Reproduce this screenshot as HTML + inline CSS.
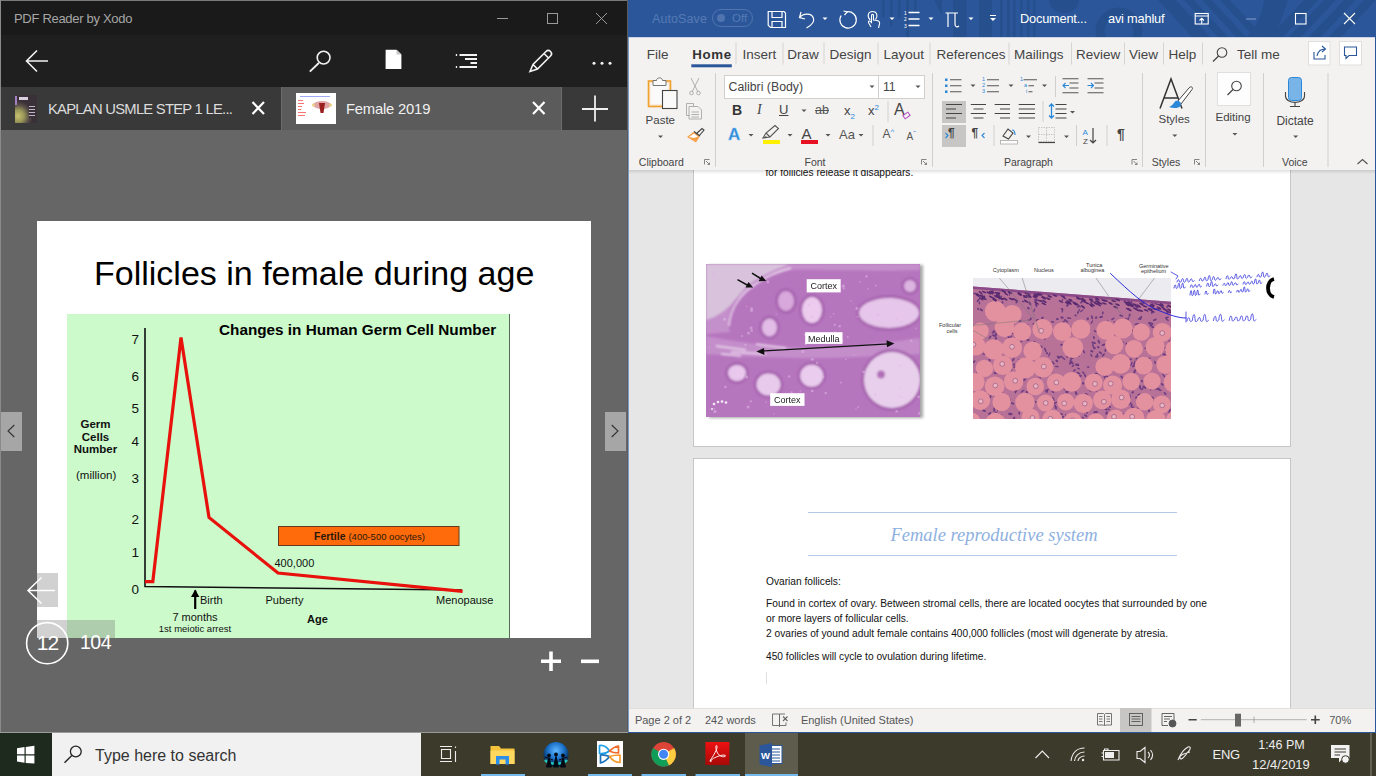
<!DOCTYPE html>
<html><head><meta charset="utf-8">
<style>
*{margin:0;padding:0;box-sizing:border-box}
html,body{width:1376px;height:776px;overflow:hidden;background:#3a3728;font-family:"Liberation Sans",sans-serif}
.a{position:absolute}
#xodo{left:0;top:0;width:628px;height:733px;background:#6b6b6b;overflow:hidden}
#word{left:628px;top:0;width:748px;height:733px;background:#e6e6e6;overflow:hidden}
#tb{left:0;top:733px;width:1376px;height:43px;background:#3b3a2b}
.w{color:#fff}
.t{position:absolute;line-height:1;white-space:nowrap}
</style></head><body>
<!-- XODO -->
<div id="xodo" class="a">
  <div class="a" style="left:0;top:0;width:628px;height:35px;background:#1a1a1a"></div>
  <div class="a" style="left:14px;top:10.5px;font-size:13px;letter-spacing:-0.3px;color:#a6a6a6;white-space:nowrap">PDF Reader by Xodo</div>
  <svg class="a" style="left:480px;top:0" width="148" height="36">
    <g stroke="#9a9a9a" stroke-width="1" fill="none">
      <line x1="17" y1="18.5" x2="28" y2="18.5"/>
      <rect x="67.5" y="13.5" width="10" height="10"/>
      <line x1="116" y1="13" x2="127" y2="24"/><line x1="127" y1="13" x2="116" y2="24"/>
    </g>
  </svg>
  <div class="a" style="left:0;top:35px;width:628px;height:52px;background:#1f1f1f"></div>
  <svg class="a" style="left:0;top:35px" width="628" height="52">
    <g stroke="#f2f2f2" fill="none" stroke-width="1.6">
      <path d="M26.5 26 H48 M37 15.5 L26.5 26 L37 36.5"/>
      <circle cx="323.6" cy="22.6" r="6.4"/>
      <path d="M309.8 36.6 L318.8 28" stroke-width="1.8"/>
      <path d="M530 36.5 L533 29.5 L546 16.5 A2.6 2.6 0 0 1 550.5 21 L537.5 34 Z M533 29.5 L537.5 34 M544 18.5 L548.5 23"/>
    </g>
    <path d="M385.6 14.7 H396.5 L401.4 19.6 V34 H385.6 Z" fill="#fff"/>
    <path d="M396.5 14.7 V19.6 H401.4 Z" fill="#c8c8c8"/>
    <g fill="#f2f2f2">
      <rect x="459.5" y="19" width="17.5" height="2"/><rect x="455.8" y="19" width="1.3" height="2"/>
      <rect x="465" y="23" width="12" height="2"/>
      <rect x="470.5" y="27" width="6.5" height="2"/>
      <rect x="459.5" y="31" width="17.5" height="2"/><rect x="455.8" y="31" width="1.3" height="2"/>
      <circle cx="594" cy="28.3" r="1.5"/><circle cx="602" cy="28.3" r="1.5"/><circle cx="610" cy="28.3" r="1.5"/>
    </g>
  </svg>
  <!-- tabs -->
  <div class="a" style="left:0;top:87px;width:281px;height:43px;background:#393939"></div>
  <div class="a" style="left:282px;top:87px;width:278.5px;height:43px;background:#5b5b5b"></div>
  <div class="a" style="left:562px;top:87px;width:65px;height:43px;background:#393939"></div>
  <div class="a" style="left:15px;top:94.5px;width:22px;height:28px;background:radial-gradient(circle at 3px 21px,#c8c070 0,#9a9858 6px,#5a5048 11px,#3a3038 15px)"></div>
  <div class="a" style="left:15px;top:96px;width:2px;height:9px;background:#a080c0"></div>
  <div class="a" style="left:19px;top:97px;width:9px;height:3px;background:#d8d0e0"></div>
  <div class="a" style="left:29px;top:104px;width:6px;height:14px;background:repeating-linear-gradient(#3a3038 0 2px,#c0b8c8 2px 3px)"></div>
  <div class="a" style="left:48px;top:100.5px;font-size:14.8px;letter-spacing:-0.75px;color:#dcdcdc;white-space:nowrap">KAPLAN USMLE STEP 1 LE...</div>
  <svg class="a" style="left:0;top:87px" width="628" height="43">
    <g stroke="#fff" stroke-width="2.2" fill="none">
      <path d="M252.5 15 L264 27 M264 15 L252.5 27"/>
      <path d="M533 15 L544.5 27 M544.5 15 L533 27"/>
    </g>
    <path d="M582 22 H608 M595 8.5 V34.5" stroke="#eee" stroke-width="1.8"/>
  </svg>
  <div class="a" style="left:296px;top:93px;width:40px;height:31px;background:#fff"></div>
  <div class="a" style="left:300px;top:95.5px;width:30px;height:1px;background:#a0a8f8"></div>
  <svg class="a" style="left:296px;top:93px" width="40" height="31">
    <g fill="#ff5050" opacity="0.8"><rect x="2" y="7" width="5" height="1"/><rect x="2" y="10" width="6" height="1"/><rect x="2" y="13" width="4" height="1"/><rect x="2" y="16" width="3" height="1"/><rect x="2" y="19" width="8" height="1"/><rect x="2" y="22" width="7" height="1"/></g>
    <ellipse cx="26" cy="12" rx="9" ry="4" fill="#d89090" opacity="0.8"/>
    <path d="M23 10 H29 L27.5 20 H24.5 Z" fill="#9a2020"/>
    <circle cx="17.5" cy="12" r="1.5" fill="#e8d080"/><circle cx="34.5" cy="12" r="1.5" fill="#e8d080"/>
  </svg>
  <div class="a" style="left:346px;top:100.5px;font-size:14.8px;letter-spacing:-0.2px;color:#f0f0f0;white-space:nowrap">Female 2019</div>
  <!-- content -->
  <div class="a" style="left:0;top:130px;width:628px;height:603px;background:#666666"></div>
  <div class="a" style="left:37px;top:221px;width:554px;height:416.5px;background:#fff"></div>
  <div class="a" style="left:94px;top:254px;font-size:34px;color:#000;white-space:nowrap">Follicles in female during age</div>
  <div class="a" style="left:67px;top:314px;width:443px;height:323.5px;background:#ccfacb;border-right:1px solid #5a6a5a"></div>
  <svg class="a" style="left:67px;top:314px" width="443" height="324">
    <g stroke="#111" fill="none" stroke-width="1.6">
      <path d="M78 14 V272.5 L395 276"/>
    </g>
    <path d="M78 267.7 L85.8 267.7 L114 23.5 L142 203.5 L211 259 L395.6 277.3" stroke="#e8110c" stroke-width="3.2" fill="none" stroke-linejoin="miter"/>
    <path d="M128.2 295 V276.5" stroke="#000" stroke-width="2.2"/>
    <path d="M124 283 L128.2 275.5 L132.4 283 Z" fill="#000"/>
    <rect x="211.5" y="212.5" width="180.5" height="19" fill="#ff6a0a" stroke="#6a3a20" stroke-width="1"/>
  </svg>
  <div class="a" style="left:219px;top:321px;font-size:15.3px;font-weight:bold;color:#000;white-space:nowrap">Changes in Human Germ Cell Number</div>
  <div class="a" style="left:68px;top:418px;width:55px;font-size:11.5px;line-height:12.7px;font-weight:bold;color:#111;text-align:center">Germ<br>Cells<br>Number</div>
  <div class="a" style="left:76px;top:469px;font-size:11.5px;color:#111;white-space:nowrap">(million)</div>
  <div class="a" style="left:120px;top:0;width:19px;font-size:13.5px;color:#111;text-align:right;line-height:13px">
    <div class="a" style="right:0;top:332.5px">7</div>
    <div class="a" style="right:0;top:369.8px">6</div>
    <div class="a" style="right:0;top:402px">5</div>
    <div class="a" style="right:0;top:435px">4</div>
    <div class="a" style="right:0;top:472px">3</div>
    <div class="a" style="right:0;top:513px">2</div>
    <div class="a" style="right:0;top:546px">1</div>
    <div class="a" style="right:0;top:583px">0</div>
  </div>
  <div class="a" style="left:314px;top:530px;font-size:10.5px;color:#2a1a0a;white-space:nowrap"><b>Fertile</b> <span style="font-size:9.5px">(400-500 oocytes)</span></div>
  <div class="a" style="left:274.5px;top:557px;font-size:11px;color:#111;white-space:nowrap">400,000</div>
  <div class="a" style="left:200px;top:594px;font-size:11px;color:#111;white-space:nowrap">Birth</div>
  <div class="a" style="left:265.5px;top:594px;font-size:11px;color:#111;white-space:nowrap">Puberty</div>
  <div class="a" style="left:436px;top:594px;font-size:11px;color:#111;white-space:nowrap">Menopause</div>
  <div class="a" style="left:307px;top:613px;font-size:11px;font-weight:bold;color:#111;white-space:nowrap">Age</div>
  <div class="a" style="left:160px;top:611px;width:70px;font-size:11px;color:#111;text-align:center;white-space:nowrap">7 months</div>
  <div class="a" style="left:150px;top:623px;width:90px;font-size:9.5px;color:#111;text-align:center;white-space:nowrap">1st meiotic arrest</div>
  <!-- overlays -->
  <div class="a" style="left:1px;top:412px;width:21px;height:38.5px;background:#a6a6a6"></div>
  <div class="a" style="left:605px;top:412px;width:21px;height:38.5px;background:#a6a6a6"></div>
  <svg class="a" style="left:0;top:400px" width="628" height="60">
    <path d="M14.3 25 L8 31 L14.3 37" stroke="#333" stroke-width="1.1" fill="none"/>
    <path d="M611.7 25 L618 31 L611.7 37" stroke="#333" stroke-width="1.1" fill="none"/>
  </svg>
  <div class="a" style="left:0;top:573px;width:58px;height:34px;background:rgba(102,102,102,0.3)"></div>
  <div class="a" style="left:0;top:620px;width:115px;height:17.5px;background:rgba(102,102,102,0.3)"></div>
  <svg class="a" style="left:0;top:560px" width="628" height="120">
    <path d="M28 30.5 H55 M41.5 17.5 L28 30.5 L41.5 43.5" stroke="#fff" stroke-width="1.5" fill="none"/>
    <circle cx="47.2" cy="83.2" r="20.6" stroke="#fff" stroke-width="1.6" fill="none"/>
    <path d="M541 101.3 H561 M551 91.6 V111" stroke="#fff" stroke-width="3.6"/>
    <path d="M581 101.3 H599" stroke="#fff" stroke-width="3.6"/>
  </svg>
  <div class="a" style="left:35px;top:631px;width:25px;font-size:21px;color:#fff;text-align:center;letter-spacing:-1px;white-space:nowrap">12</div>
  <div class="a" style="left:80px;top:631px;font-size:19.5px;color:#fff;white-space:nowrap;letter-spacing:-0.5px">104</div>
  <!-- borders -->
  <div class="a" style="left:0;top:0;width:628px;height:1px;background:#7a7a7a"></div>
  <div class="a" style="left:0;top:0;width:1px;height:733px;background:#8a8a8a"></div>
  <div class="a" style="left:627px;top:0;width:1px;height:733px;background:#5c5c5c"></div>
  <div class="a" style="left:0;top:732px;width:628px;height:1px;background:#9a9a9a"></div>
</div>
<!-- WORD -->
<div id="word" class="a">
  <!-- title bar -->
  <div class="a" style="left:0;top:0;width:748px;height:37px;background:#2b579a;overflow:hidden">
    <svg class="a" style="left:0;top:0" width="748" height="37">
      <g fill="#264f8e">
        <rect x="254" y="0" width="2.5" height="17"/><rect x="262" y="0" width="2.5" height="26"/><rect x="270" y="0" width="2.5" height="18"/>
        <rect x="278" y="0" width="3" height="37"/><rect x="286" y="0" width="2.5" height="15"/>
        <path d="M306 0 H314 V15 Z"/>
        <rect x="325" y="0" width="13.5" height="37"/><rect x="351" y="0" width="13" height="37"/>
        <rect x="372" y="0" width="2.5" height="37"/><rect x="379" y="0" width="2.5" height="37"/><rect x="385" y="0" width="2.5" height="37"/>
        <rect x="392" y="0" width="2.5" height="37"/><rect x="399" y="0" width="2.5" height="37"/><rect x="405" y="0" width="2.5" height="37"/>
        <path d="M421 0 A15 13 0 0 0 451 0 Z"/>
        <circle cx="491" cy="31" r="19" fill="none" stroke="#264f8e" stroke-width="9"/>
        <path d="M530 0 H548 L582 37 H564 Z M556 0 H566 L600 37 H590 Z M574 0 H584 L618 37 H608 Z M592 0 H602 L636 37 H626 Z"/>
        <path d="M636 0 H660 C656 14 650 28 645 37 H618 C628 28 634 14 636 0 Z"/>
        <path d="M676 0 H690 L655 37 H641 Z M696 0 H708 L673 37 H661 Z M716 0 H728 L693 37 H681 Z M736 0 H748 L713 37 H701 Z"/>
      </g>
    </svg>
    <div class="a" style="left:24px;top:12px;font-size:12.5px;color:#557ab5;white-space:nowrap;letter-spacing:0.1px">AutoSave</div>
    <div class="a" style="left:84px;top:9px;width:41px;height:18px;border:1px solid #4f74b0;border-radius:9px"></div>
    <div class="a" style="left:89px;top:14px;width:8px;height:8px;border-radius:50%;background:#4f74b0"></div>
    <div class="a" style="left:104px;top:12px;font-size:11.5px;color:#557ab5;white-space:nowrap">Off</div>
    <svg class="a" style="left:0;top:0" width="748" height="37">
      <g stroke="#fff" fill="none" stroke-width="1.2">
        <path d="M140.2 11.5 H156 L157.5 13 V27.5 H142.5 L140.2 25.2 Z M144 11.5 V17.5 H154 V11.5 M144 27.5 V21.5 H154 V27.5"/>
        <path d="M173 12 L171.5 17.5 L177 19 M171.8 17.3 C175 13 184 12.5 185.5 18.5 C186.5 22 184 25 178.5 28"/>
        <path d="M219 11.8 A8.2 8.2 0 1 1 213.2 15.5"/><path d="M215.5 11 L219.3 11.8 L216.5 15"/>
        <path d="M280.5 12.5 H291.5 M280.5 19 H291.5 M280.5 25.5 H291.5" stroke-width="1.3"/>
        <path d="M317.5 13 H330 M320 13 V27 M327 13 V24 C327 27 329 27.5 331 26"/>
      </g>
      <g fill="#fff" font-size="5" font-family="Liberation Sans">
        <text x="276" y="15">1</text><text x="276" y="21">2</text><text x="276" y="27.5">3</text>
      </g>
      <g stroke="#fff" stroke-width="1.1" fill="none"><path d="M242.2 20 C239 17 239.5 11.5 244.5 11.5 C249.5 11.5 250 17 247.5 19.5"/><path d="M243 27 L240.5 22.5 C240 21 241.5 20.5 242.5 21.5 L243.5 22.5 V15.5 C243.5 14 245.5 14 245.5 15.5 V20 L249 20.5 C251 21 252 22 251.5 24 L250.5 28"/></g>
      <g fill="#fff">
        <path d="M194.5 17.5 h5 l-2.5 2.5z M261.5 17.5 h5 l-2.5 2.5z M300.5 17.5 h5 l-2.5 2.5z M340.5 17.5 h5 l-2.5 2.5z"/>
        <rect x="362" y="15" width="6" height="1"/><path d="M362 18 h6 l-3 3z"/>
      </g>
    </svg>
    <div class="a" style="left:392px;top:10.5px;font-size:12.8px;color:#fff;white-space:nowrap;letter-spacing:-0.2px">Document...</div>
    <div class="a" style="left:480px;top:10.5px;font-size:12.8px;color:#fff;white-space:nowrap;letter-spacing:-0.2px">avi mahluf</div>
    <svg class="a" style="left:0;top:0" width="748" height="37">
      <g stroke="#fff" fill="none" stroke-width="1.1">
        <rect x="567.2" y="13.5" width="13" height="10.5"/><path d="M567 16 H580.5 M573.7 23.8 V18.5 M571.5 20.5 L573.7 18.3 L576 20.5"/>
        <rect x="667.5" y="13.5" width="10.5" height="10.5"/>
        <path d="M716 13 L727 24 M727 13 L716 24"/>
      </g>
      <path d="M618 19 H628" stroke="#7d9ac8" stroke-width="1.1"/>
    </svg>
  </div>
  <div class="a" style="left:0;top:37px;width:1px;height:696px;background:#7f9bc8"></div>
  <!-- ribbon -->
  <div class="a" style="left:1px;top:37px;width:746px;height:133px;background:#f3f2f1"></div>
  <div class="a" style="left:747px;top:37px;width:1px;height:696px;background:#2b579a"></div>
  <div class="a" style="left:1px;top:170px;width:746px;height:538px;background:#e6e6e6"></div>
  <div class="a" style="left:65px;top:170px;width:598px;height:277px;background:#fff;border:1px solid #c6c6c6;border-top:none"></div>
  <div class="a" style="left:65px;top:458px;width:598px;height:300px;background:#fff;border:1px solid #c6c6c6"></div>
<div class="a" style="left:0;top:170px;width:748px;height:20px;overflow:hidden"><div class="t" style="left:137.5px;top:-1.8px;font-size:10.2px;color:#111">for follicles release it disappears.</div></div>
<svg class="a" style="left:77.5px;top:263.8px;filter:drop-shadow(3px 1px 1.5px rgba(0,0,0,0.35))" width="214" height="153"><defs><filter id="bl"><feGaussianBlur stdDeviation="1.3"/></filter><filter id="bl2"><feGaussianBlur stdDeviation="0.5"/></filter></defs><rect width="214" height="153" fill="#b676be"/><g filter="url(#bl)"><path d="M0 0 H214 V6 C160 8 110 5 85 6 C60 12 42 22 30 36 C22 48 20 58 24 68 L0 70 Z" fill="#c490cb"/><path d="M0 0 H84 C62 8 45 16 34 30 C24 42 18 50 0 56 Z" fill="#d8c2dc"/><path d="M23 62 C24 45 34 30 50 20 C60 13 72 7 85 4" stroke="#eedcf0" stroke-width="1.5" fill="none"/><path d="M0 72 C30 78 60 82 100 84 C140 84 170 80 214 74 V90 C170 92 140 94 100 94 C60 94 30 92 0 90 Z" fill="#c48ecb"/><path d="M10 82 L40 86 M25 88 L60 90 M50 80 L80 84 M15 90 L35 92" stroke="#eed8f0" stroke-width="1.6"/><ellipse cx="183" cy="49" rx="33" ry="18" fill="#a866b0"/><ellipse cx="183" cy="49" rx="30" ry="15" fill="#e6c6ea"/><ellipse cx="186" cy="116" rx="31" ry="31" fill="#a866b0"/><ellipse cx="186" cy="116" rx="28" ry="28" fill="#e8d0ec"/><ellipse cx="106" cy="46" rx="13" ry="16" fill="#a866b0"/><ellipse cx="106" cy="46" rx="10" ry="13" fill="#eccbee"/><ellipse cx="80" cy="37" rx="11" ry="13" fill="#a866b0"/><ellipse cx="80" cy="37" rx="8" ry="10" fill="#d8a8dc"/><ellipse cx="63.5" cy="63.5" rx="10.5" ry="12" fill="#a866b0"/><ellipse cx="63.5" cy="63.5" rx="7.5" ry="9" fill="#e2bce6"/><ellipse cx="31" cy="109" rx="12" ry="11" fill="#a866b0"/><ellipse cx="31" cy="109" rx="9" ry="8" fill="#e8c8ec"/><ellipse cx="62.5" cy="120.5" rx="15" ry="14" fill="#a866b0"/><ellipse cx="62.5" cy="120.5" rx="12" ry="11" fill="#e8caec"/><ellipse cx="105.7" cy="111.7" rx="14.5" ry="14" fill="#a866b0"/><ellipse cx="105.7" cy="111.7" rx="11.5" ry="11" fill="#eacdee"/><ellipse cx="204" cy="22" rx="9" ry="9" fill="#a866b0"/><ellipse cx="204" cy="22" rx="6" ry="6" fill="#dcb4e0"/><circle cx="175" cy="110.6" r="4" fill="#b070b8"/></g><g filter="url(#bl2)" fill="#e0b8e6" opacity="0.55"><circle cx="96.8" cy="87.5" r="1.5"/><circle cx="99.6" cy="80.1" r="1.2"/><circle cx="39.5" cy="80.7" r="1.2"/><circle cx="169.7" cy="21.4" r="0.9"/><circle cx="19.4" cy="123.0" r="1.3"/><circle cx="9.0" cy="147.5" r="1.6"/><circle cx="139.9" cy="95.4" r="0.8"/><circle cx="3.2" cy="83.0" r="0.7"/><circle cx="40.7" cy="42.4" r="0.6"/><circle cx="99.3" cy="70.6" r="1.4"/><circle cx="111.1" cy="98.9" r="1.1"/><circle cx="141.8" cy="72.9" r="0.9"/><circle cx="213.5" cy="149.4" r="1.4"/><circle cx="151.5" cy="52.8" r="0.8"/><circle cx="61.9" cy="18.0" r="1.4"/><circle cx="85.7" cy="128.2" r="1.0"/><circle cx="205.0" cy="128.3" r="0.6"/><circle cx="44.9" cy="137.3" r="1.1"/><circle cx="209.8" cy="64.4" r="0.7"/><circle cx="134.7" cy="118.5" r="0.9"/><circle cx="18.6" cy="55.2" r="1.6"/><circle cx="162.2" cy="24.8" r="0.8"/><circle cx="21.6" cy="16.5" r="1.4"/><circle cx="38.0" cy="87.4" r="1.0"/><circle cx="40.8" cy="111.9" r="0.7"/><circle cx="137.8" cy="24.5" r="1.0"/><circle cx="45.6" cy="46.3" r="1.6"/><circle cx="171.9" cy="51.2" r="1.5"/><circle cx="45.1" cy="64.0" r="1.5"/><circle cx="137.4" cy="22.2" r="1.6"/><circle cx="45.6" cy="44.7" r="1.4"/><circle cx="70.4" cy="50.1" r="0.7"/><circle cx="19.3" cy="90.7" r="0.8"/><circle cx="128.7" cy="60.8" r="1.1"/><circle cx="205.3" cy="76.7" r="1.2"/><circle cx="185.4" cy="34.0" r="0.8"/><circle cx="194.4" cy="124.1" r="0.8"/><circle cx="40.6" cy="113.0" r="1.5"/><circle cx="42.1" cy="142.9" r="1.5"/><circle cx="129.2" cy="67.8" r="0.7"/><circle cx="8.3" cy="144.7" r="0.8"/><circle cx="150.8" cy="44.5" r="1.4"/><circle cx="127.6" cy="49.7" r="0.8"/><circle cx="154.2" cy="17.8" r="0.8"/><circle cx="119.7" cy="129.0" r="1.2"/><circle cx="60.0" cy="138.3" r="0.8"/><circle cx="3.5" cy="46.2" r="1.0"/><circle cx="12.9" cy="33.0" r="1.0"/><circle cx="122.4" cy="26.7" r="1.0"/><circle cx="190.7" cy="147.2" r="1.3"/><circle cx="147.9" cy="91.0" r="0.7"/><circle cx="7.5" cy="10.5" r="1.5"/><circle cx="150.0" cy="144.7" r="0.6"/><circle cx="136.1" cy="76.5" r="1.3"/><circle cx="68.2" cy="149.9" r="0.7"/><circle cx="116.9" cy="112.7" r="1.5"/><circle cx="157.7" cy="107.9" r="1.4"/><circle cx="195.8" cy="58.0" r="1.3"/><circle cx="192.8" cy="131.7" r="1.0"/><circle cx="169.2" cy="130.6" r="1.2"/><circle cx="133.7" cy="62.3" r="1.2"/><circle cx="130.3" cy="19.4" r="1.2"/><circle cx="212.6" cy="132.9" r="1.3"/><circle cx="83.1" cy="112.4" r="1.2"/><circle cx="94.3" cy="127.0" r="0.7"/><circle cx="160.5" cy="12.2" r="1.2"/><circle cx="102.9" cy="40.7" r="1.3"/><circle cx="106.4" cy="95.3" r="1.5"/><circle cx="54.7" cy="9.6" r="0.9"/><circle cx="145.1" cy="36.8" r="0.8"/><circle cx="193.8" cy="101.7" r="1.0"/><circle cx="190.8" cy="54.4" r="1.3"/><circle cx="42.5" cy="69.2" r="1.4"/><circle cx="195.6" cy="133.0" r="1.0"/><circle cx="124.8" cy="52.9" r="0.7"/><circle cx="106.2" cy="126.9" r="1.4"/><circle cx="152.2" cy="142.9" r="0.9"/><circle cx="36.2" cy="72.0" r="0.9"/><circle cx="45.8" cy="66.8" r="1.2"/><circle cx="105.7" cy="52.8" r="1.4"/></g><g fill="#fff" opacity="0.85"><circle cx="8" cy="140" r="1.3"/><circle cx="12" cy="138" r="1.3"/><circle cx="16" cy="137.5" r="1.3"/><circle cx="20" cy="138.5" r="1.3"/><circle cx="6" cy="145" r="1"/></g><rect x="100.7" y="15.2" width="34" height="13.2" fill="#fff"/><text x="117.7" y="25.3" font-size="9" font-family="Liberation Sans" text-anchor="middle" fill="#222">Cortex</text><rect x="99.2" y="68.2" width="37.3" height="11.7" fill="#fff"/><text x="117.8" y="77.5" font-size="9" font-family="Liberation Sans" text-anchor="middle" fill="#222">Medulla</text><rect x="64.2" y="129.2" width="34.3" height="12.7" fill="#fff"/><text x="81.3" y="138.8" font-size="9" font-family="Liberation Sans" text-anchor="middle" fill="#222">Cortex</text><path d="M54 87.2 L183 79.8" stroke="#111" stroke-width="1.3"/><path d="M50.4 87.6 L58 84 L58.5 91 Z M188.4 79.5 L180.5 76.2 L181 83.2 Z" fill="#111"/><path d="M31.5 15.7 L43 22 M46 9.2 L57 16" stroke="#111" stroke-width="1.5"/><path d="M47.1 23.6 L39.5 23.5 L42.5 18 Z M60.2 17 L52.6 17.2 L55.7 11.5 Z" fill="#111"/></svg>
<svg class="a" style="left:344.7px;top:278px" width="198" height="141"><defs><filter id="hb"><feGaussianBlur stdDeviation="0.7"/></filter><filter id="hb2"><feGaussianBlur stdDeviation="0.4"/></filter></defs><rect width="198" height="141" fill="#b87298"/><path d="M0 0 H198 V23.7 L0 8.5 Z" fill="#ececf0"/><g filter="url(#hb2)"><ellipse cx="32.7" cy="101.0" rx="1.9" ry="0.8" fill="#6e3e80" transform="rotate(114 32.7 101.0)"/><ellipse cx="156.9" cy="118.1" rx="1.9" ry="0.8" fill="#6e3e80" transform="rotate(92 156.9 118.1)"/><ellipse cx="0.6" cy="58.3" rx="1.3" ry="1.1" fill="#6e3e80" transform="rotate(105 0.6 58.3)"/><ellipse cx="46.0" cy="42.8" rx="2.6" ry="1.1" fill="#6e3e80" transform="rotate(8 46.0 42.8)"/><ellipse cx="173.3" cy="95.6" rx="1.7" ry="0.9" fill="#6e3e80" transform="rotate(6 173.3 95.6)"/><ellipse cx="22.9" cy="134.8" rx="1.4" ry="1.1" fill="#6e3e80" transform="rotate(66 22.9 134.8)"/><ellipse cx="24.7" cy="131.7" rx="2.0" ry="0.9" fill="#6e3e80" transform="rotate(82 24.7 131.7)"/><ellipse cx="96.0" cy="40.1" rx="2.4" ry="0.8" fill="#6e3e80" transform="rotate(7 96.0 40.1)"/><ellipse cx="154.5" cy="46.3" rx="2.5" ry="1.1" fill="#6e3e80" transform="rotate(174 154.5 46.3)"/><ellipse cx="151.0" cy="90.7" rx="1.4" ry="0.9" fill="#6e3e80" transform="rotate(131 151.0 90.7)"/><ellipse cx="163.7" cy="46.0" rx="2.4" ry="0.9" fill="#6e3e80" transform="rotate(166 163.7 46.0)"/><ellipse cx="72.3" cy="71.9" rx="2.6" ry="0.9" fill="#6e3e80" transform="rotate(69 72.3 71.9)"/><ellipse cx="5.3" cy="22.1" rx="2.6" ry="0.9" fill="#6e3e80" transform="rotate(129 5.3 22.1)"/><ellipse cx="97.3" cy="85.3" rx="1.5" ry="1.0" fill="#6e3e80" transform="rotate(135 97.3 85.3)"/><ellipse cx="110.2" cy="94.6" rx="1.4" ry="0.9" fill="#6e3e80" transform="rotate(33 110.2 94.6)"/><ellipse cx="183.6" cy="64.3" rx="1.6" ry="0.8" fill="#6e3e80" transform="rotate(108 183.6 64.3)"/><ellipse cx="13.0" cy="116.7" rx="1.7" ry="1.0" fill="#6e3e80" transform="rotate(140 13.0 116.7)"/><ellipse cx="133.8" cy="128.7" rx="1.8" ry="1.2" fill="#6e3e80" transform="rotate(172 133.8 128.7)"/><ellipse cx="190.4" cy="93.2" rx="1.9" ry="0.9" fill="#6e3e80" transform="rotate(159 190.4 93.2)"/><ellipse cx="48.9" cy="125.2" rx="1.3" ry="1.1" fill="#6e3e80" transform="rotate(29 48.9 125.2)"/><ellipse cx="153.2" cy="79.1" rx="1.3" ry="0.8" fill="#6e3e80" transform="rotate(151 153.2 79.1)"/><ellipse cx="57.4" cy="67.2" rx="1.3" ry="0.9" fill="#6e3e80" transform="rotate(31 57.4 67.2)"/><ellipse cx="178.0" cy="139.1" rx="1.9" ry="0.8" fill="#6e3e80" transform="rotate(134 178.0 139.1)"/><ellipse cx="189.9" cy="85.6" rx="1.2" ry="0.8" fill="#6e3e80" transform="rotate(131 189.9 85.6)"/><ellipse cx="166.0" cy="116.7" rx="2.0" ry="0.9" fill="#6e3e80" transform="rotate(159 166.0 116.7)"/><ellipse cx="115.1" cy="122.5" rx="1.9" ry="0.8" fill="#6e3e80" transform="rotate(55 115.1 122.5)"/><ellipse cx="152.1" cy="22.4" rx="2.5" ry="0.7" fill="#6e3e80" transform="rotate(123 152.1 22.4)"/><ellipse cx="117.5" cy="97.4" rx="2.0" ry="0.8" fill="#6e3e80" transform="rotate(153 117.5 97.4)"/><ellipse cx="80.3" cy="135.8" rx="1.4" ry="0.7" fill="#6e3e80" transform="rotate(163 80.3 135.8)"/><ellipse cx="18.6" cy="14.2" rx="1.4" ry="1.1" fill="#6e3e80" transform="rotate(80 18.6 14.2)"/><ellipse cx="129.8" cy="34.9" rx="1.7" ry="0.9" fill="#6e3e80" transform="rotate(97 129.8 34.9)"/><ellipse cx="43.5" cy="34.1" rx="1.7" ry="1.1" fill="#6e3e80" transform="rotate(33 43.5 34.1)"/><ellipse cx="108.9" cy="23.6" rx="2.4" ry="1.1" fill="#6e3e80" transform="rotate(128 108.9 23.6)"/><ellipse cx="156.6" cy="22.5" rx="1.3" ry="1.1" fill="#6e3e80" transform="rotate(83 156.6 22.5)"/><ellipse cx="34.7" cy="103.8" rx="2.2" ry="0.9" fill="#6e3e80" transform="rotate(46 34.7 103.8)"/><ellipse cx="8.3" cy="61.0" rx="2.5" ry="0.8" fill="#6e3e80" transform="rotate(56 8.3 61.0)"/><ellipse cx="99.6" cy="85.2" rx="1.3" ry="1.0" fill="#6e3e80" transform="rotate(171 99.6 85.2)"/><ellipse cx="100.6" cy="108.2" rx="1.6" ry="1.0" fill="#6e3e80" transform="rotate(174 100.6 108.2)"/><ellipse cx="104.1" cy="86.8" rx="2.3" ry="1.2" fill="#6e3e80" transform="rotate(11 104.1 86.8)"/><ellipse cx="70.3" cy="55.0" rx="1.4" ry="0.7" fill="#6e3e80" transform="rotate(179 70.3 55.0)"/><ellipse cx="14.5" cy="116.8" rx="1.8" ry="1.0" fill="#6e3e80" transform="rotate(137 14.5 116.8)"/><ellipse cx="3.9" cy="94.4" rx="1.9" ry="0.9" fill="#6e3e80" transform="rotate(80 3.9 94.4)"/><ellipse cx="79.5" cy="43.9" rx="1.8" ry="0.8" fill="#6e3e80" transform="rotate(9 79.5 43.9)"/><ellipse cx="139.4" cy="118.9" rx="1.8" ry="0.8" fill="#6e3e80" transform="rotate(130 139.4 118.9)"/><ellipse cx="76.3" cy="76.5" rx="2.5" ry="0.7" fill="#6e3e80" transform="rotate(114 76.3 76.5)"/><ellipse cx="95.0" cy="77.9" rx="2.4" ry="1.1" fill="#6e3e80" transform="rotate(129 95.0 77.9)"/><ellipse cx="124.1" cy="111.6" rx="2.4" ry="1.0" fill="#6e3e80" transform="rotate(120 124.1 111.6)"/><ellipse cx="135.2" cy="49.6" rx="1.7" ry="1.0" fill="#6e3e80" transform="rotate(165 135.2 49.6)"/><ellipse cx="163.3" cy="136.7" rx="1.2" ry="0.9" fill="#6e3e80" transform="rotate(178 163.3 136.7)"/><ellipse cx="61.7" cy="63.8" rx="2.0" ry="0.7" fill="#6e3e80" transform="rotate(26 61.7 63.8)"/><ellipse cx="59.9" cy="133.8" rx="1.8" ry="0.8" fill="#6e3e80" transform="rotate(134 59.9 133.8)"/><ellipse cx="189.3" cy="106.4" rx="1.7" ry="1.0" fill="#6e3e80" transform="rotate(37 189.3 106.4)"/><ellipse cx="135.0" cy="51.5" rx="1.7" ry="0.8" fill="#6e3e80" transform="rotate(171 135.0 51.5)"/><ellipse cx="167.4" cy="40.6" rx="1.5" ry="1.0" fill="#6e3e80" transform="rotate(123 167.4 40.6)"/><ellipse cx="54.9" cy="62.0" rx="1.9" ry="0.9" fill="#6e3e80" transform="rotate(169 54.9 62.0)"/><ellipse cx="122.2" cy="53.2" rx="1.7" ry="0.8" fill="#6e3e80" transform="rotate(31 122.2 53.2)"/><ellipse cx="37.3" cy="136.0" rx="2.3" ry="1.2" fill="#6e3e80" transform="rotate(6 37.3 136.0)"/><ellipse cx="139.5" cy="22.5" rx="1.3" ry="1.0" fill="#6e3e80" transform="rotate(90 139.5 22.5)"/><ellipse cx="138.7" cy="49.2" rx="2.0" ry="0.7" fill="#6e3e80" transform="rotate(1 138.7 49.2)"/><ellipse cx="61.2" cy="71.8" rx="1.7" ry="0.8" fill="#6e3e80" transform="rotate(161 61.2 71.8)"/><ellipse cx="156.8" cy="119.8" rx="1.3" ry="0.8" fill="#6e3e80" transform="rotate(95 156.8 119.8)"/><ellipse cx="79.8" cy="84.8" rx="2.3" ry="1.1" fill="#6e3e80" transform="rotate(41 79.8 84.8)"/><ellipse cx="183.2" cy="127.3" rx="2.0" ry="0.7" fill="#6e3e80" transform="rotate(3 183.2 127.3)"/><ellipse cx="178.1" cy="111.2" rx="1.5" ry="0.7" fill="#6e3e80" transform="rotate(137 178.1 111.2)"/><ellipse cx="161.4" cy="94.1" rx="1.9" ry="1.1" fill="#6e3e80" transform="rotate(112 161.4 94.1)"/><ellipse cx="66.9" cy="48.7" rx="1.6" ry="1.0" fill="#6e3e80" transform="rotate(64 66.9 48.7)"/><ellipse cx="176.2" cy="31.4" rx="1.9" ry="1.0" fill="#6e3e80" transform="rotate(12 176.2 31.4)"/><ellipse cx="37.6" cy="47.1" rx="1.3" ry="0.9" fill="#6e3e80" transform="rotate(11 37.6 47.1)"/><ellipse cx="134.8" cy="99.0" rx="1.3" ry="1.2" fill="#6e3e80" transform="rotate(28 134.8 99.0)"/><ellipse cx="106.6" cy="68.1" rx="2.2" ry="1.0" fill="#6e3e80" transform="rotate(124 106.6 68.1)"/><ellipse cx="15.5" cy="118.5" rx="1.3" ry="0.9" fill="#6e3e80" transform="rotate(38 15.5 118.5)"/><ellipse cx="105.4" cy="95.1" rx="2.2" ry="0.9" fill="#6e3e80" transform="rotate(31 105.4 95.1)"/><ellipse cx="32.1" cy="121.8" rx="2.5" ry="1.0" fill="#6e3e80" transform="rotate(145 32.1 121.8)"/><ellipse cx="43.0" cy="112.5" rx="1.9" ry="1.2" fill="#6e3e80" transform="rotate(162 43.0 112.5)"/><ellipse cx="192.1" cy="69.8" rx="2.5" ry="1.1" fill="#6e3e80" transform="rotate(170 192.1 69.8)"/><ellipse cx="2.2" cy="55.9" rx="2.1" ry="1.1" fill="#6e3e80" transform="rotate(110 2.2 55.9)"/><ellipse cx="128.1" cy="39.0" rx="2.0" ry="1.1" fill="#6e3e80" transform="rotate(168 128.1 39.0)"/><ellipse cx="41.0" cy="140.8" rx="2.3" ry="1.1" fill="#6e3e80" transform="rotate(100 41.0 140.8)"/><ellipse cx="174.8" cy="65.7" rx="1.8" ry="0.8" fill="#6e3e80" transform="rotate(15 174.8 65.7)"/><ellipse cx="106.9" cy="118.2" rx="1.4" ry="0.7" fill="#6e3e80" transform="rotate(65 106.9 118.2)"/><ellipse cx="83.7" cy="88.5" rx="2.1" ry="0.8" fill="#6e3e80" transform="rotate(5 83.7 88.5)"/><ellipse cx="21.2" cy="131.6" rx="2.5" ry="1.0" fill="#6e3e80" transform="rotate(94 21.2 131.6)"/><ellipse cx="24.3" cy="42.5" rx="2.1" ry="1.1" fill="#6e3e80" transform="rotate(76 24.3 42.5)"/><ellipse cx="148.8" cy="99.1" rx="1.8" ry="0.9" fill="#6e3e80" transform="rotate(46 148.8 99.1)"/><ellipse cx="96.9" cy="49.9" rx="1.8" ry="0.7" fill="#6e3e80" transform="rotate(97 96.9 49.9)"/><ellipse cx="162.9" cy="91.8" rx="2.2" ry="1.1" fill="#6e3e80" transform="rotate(144 162.9 91.8)"/><ellipse cx="196.7" cy="68.5" rx="1.2" ry="1.0" fill="#6e3e80" transform="rotate(71 196.7 68.5)"/><ellipse cx="115.1" cy="89.1" rx="1.5" ry="0.8" fill="#6e3e80" transform="rotate(180 115.1 89.1)"/><ellipse cx="145.4" cy="118.4" rx="1.3" ry="0.9" fill="#6e3e80" transform="rotate(87 145.4 118.4)"/><ellipse cx="163.6" cy="81.5" rx="1.7" ry="1.0" fill="#6e3e80" transform="rotate(83 163.6 81.5)"/><ellipse cx="118.5" cy="103.4" rx="2.3" ry="0.9" fill="#6e3e80" transform="rotate(156 118.5 103.4)"/><ellipse cx="49.6" cy="113.2" rx="2.5" ry="0.8" fill="#6e3e80" transform="rotate(143 49.6 113.2)"/><ellipse cx="167.8" cy="128.0" rx="1.6" ry="1.0" fill="#6e3e80" transform="rotate(14 167.8 128.0)"/><ellipse cx="28.9" cy="119.2" rx="2.2" ry="0.8" fill="#6e3e80" transform="rotate(48 28.9 119.2)"/><ellipse cx="43.2" cy="39.4" rx="2.2" ry="0.8" fill="#6e3e80" transform="rotate(90 43.2 39.4)"/><ellipse cx="135.9" cy="60.5" rx="1.7" ry="0.8" fill="#6e3e80" transform="rotate(117 135.9 60.5)"/><ellipse cx="27.9" cy="19.1" rx="1.8" ry="0.8" fill="#6e3e80" transform="rotate(125 27.9 19.1)"/><ellipse cx="174.4" cy="100.2" rx="2.2" ry="1.0" fill="#6e3e80" transform="rotate(4 174.4 100.2)"/><ellipse cx="87.9" cy="78.7" rx="1.7" ry="1.0" fill="#6e3e80" transform="rotate(173 87.9 78.7)"/><ellipse cx="125.9" cy="63.7" rx="2.3" ry="1.0" fill="#6e3e80" transform="rotate(62 125.9 63.7)"/><ellipse cx="90.5" cy="80.4" rx="2.3" ry="0.7" fill="#6e3e80" transform="rotate(40 90.5 80.4)"/><ellipse cx="127.4" cy="74.7" rx="2.0" ry="1.0" fill="#6e3e80" transform="rotate(40 127.4 74.7)"/><ellipse cx="17.2" cy="74.6" rx="2.3" ry="0.9" fill="#6e3e80" transform="rotate(30 17.2 74.6)"/><ellipse cx="65.0" cy="41.8" rx="1.5" ry="0.8" fill="#6e3e80" transform="rotate(9 65.0 41.8)"/><ellipse cx="123.6" cy="122.4" rx="1.4" ry="1.0" fill="#6e3e80" transform="rotate(40 123.6 122.4)"/><ellipse cx="22.9" cy="63.8" rx="1.5" ry="1.0" fill="#6e3e80" transform="rotate(137 22.9 63.8)"/><ellipse cx="106.7" cy="28.2" rx="2.0" ry="0.7" fill="#6e3e80" transform="rotate(44 106.7 28.2)"/><ellipse cx="40.3" cy="86.7" rx="1.9" ry="1.0" fill="#6e3e80" transform="rotate(147 40.3 86.7)"/><ellipse cx="1.8" cy="49.4" rx="2.5" ry="0.9" fill="#6e3e80" transform="rotate(57 1.8 49.4)"/><ellipse cx="155.4" cy="25.6" rx="2.4" ry="1.1" fill="#6e3e80" transform="rotate(90 155.4 25.6)"/><ellipse cx="114.8" cy="40.7" rx="1.3" ry="1.2" fill="#6e3e80" transform="rotate(167 114.8 40.7)"/><ellipse cx="153.7" cy="107.5" rx="1.4" ry="0.9" fill="#6e3e80" transform="rotate(96 153.7 107.5)"/><ellipse cx="131.5" cy="99.2" rx="2.3" ry="0.7" fill="#6e3e80" transform="rotate(70 131.5 99.2)"/><ellipse cx="56.9" cy="25.4" rx="2.3" ry="1.1" fill="#6e3e80" transform="rotate(58 56.9 25.4)"/><ellipse cx="29.6" cy="51.6" rx="2.1" ry="0.9" fill="#6e3e80" transform="rotate(20 29.6 51.6)"/><ellipse cx="45.9" cy="60.9" rx="1.8" ry="1.0" fill="#6e3e80" transform="rotate(156 45.9 60.9)"/><ellipse cx="124.3" cy="76.8" rx="1.7" ry="0.8" fill="#6e3e80" transform="rotate(100 124.3 76.8)"/><ellipse cx="97.9" cy="54.8" rx="1.5" ry="1.2" fill="#6e3e80" transform="rotate(59 97.9 54.8)"/><ellipse cx="84.3" cy="41.0" rx="1.5" ry="1.1" fill="#6e3e80" transform="rotate(6 84.3 41.0)"/><ellipse cx="66.7" cy="98.9" rx="2.1" ry="0.9" fill="#6e3e80" transform="rotate(41 66.7 98.9)"/><ellipse cx="145.8" cy="84.3" rx="1.6" ry="1.0" fill="#6e3e80" transform="rotate(68 145.8 84.3)"/><ellipse cx="164.7" cy="104.4" rx="1.7" ry="1.1" fill="#6e3e80" transform="rotate(86 164.7 104.4)"/><ellipse cx="167.6" cy="39.7" rx="2.3" ry="1.0" fill="#6e3e80" transform="rotate(122 167.6 39.7)"/><ellipse cx="190.9" cy="126.9" rx="2.6" ry="0.9" fill="#6e3e80" transform="rotate(44 190.9 126.9)"/><ellipse cx="75.2" cy="138.0" rx="1.8" ry="1.0" fill="#6e3e80" transform="rotate(30 75.2 138.0)"/><ellipse cx="54.0" cy="47.7" rx="2.1" ry="1.1" fill="#6e3e80" transform="rotate(143 54.0 47.7)"/><ellipse cx="156.4" cy="125.7" rx="2.4" ry="1.2" fill="#6e3e80" transform="rotate(161 156.4 125.7)"/><ellipse cx="98.9" cy="104.0" rx="2.6" ry="1.0" fill="#6e3e80" transform="rotate(92 98.9 104.0)"/><ellipse cx="85.3" cy="99.0" rx="1.4" ry="0.9" fill="#6e3e80" transform="rotate(53 85.3 99.0)"/><ellipse cx="27.1" cy="12.1" rx="1.8" ry="1.1" fill="#6e3e80" transform="rotate(17 27.1 12.1)"/><ellipse cx="9.6" cy="93.5" rx="1.9" ry="0.8" fill="#6e3e80" transform="rotate(20 9.6 93.5)"/><ellipse cx="88.3" cy="105.1" rx="1.7" ry="1.1" fill="#6e3e80" transform="rotate(74 88.3 105.1)"/><ellipse cx="22.9" cy="56.5" rx="2.4" ry="1.2" fill="#6e3e80" transform="rotate(126 22.9 56.5)"/><ellipse cx="50.9" cy="93.2" rx="2.2" ry="1.1" fill="#6e3e80" transform="rotate(56 50.9 93.2)"/><ellipse cx="26.7" cy="56.2" rx="1.7" ry="1.0" fill="#6e3e80" transform="rotate(169 26.7 56.2)"/><ellipse cx="162.1" cy="55.1" rx="1.2" ry="0.9" fill="#6e3e80" transform="rotate(141 162.1 55.1)"/><ellipse cx="33.0" cy="56.6" rx="1.2" ry="1.1" fill="#6e3e80" transform="rotate(38 33.0 56.6)"/><ellipse cx="34.4" cy="86.0" rx="2.4" ry="1.1" fill="#6e3e80" transform="rotate(100 34.4 86.0)"/><ellipse cx="123.1" cy="39.6" rx="1.3" ry="1.2" fill="#6e3e80" transform="rotate(137 123.1 39.6)"/><ellipse cx="61.1" cy="46.3" rx="1.8" ry="1.1" fill="#6e3e80" transform="rotate(39 61.1 46.3)"/><ellipse cx="169.3" cy="110.9" rx="1.5" ry="0.9" fill="#6e3e80" transform="rotate(131 169.3 110.9)"/><ellipse cx="60.2" cy="69.1" rx="2.6" ry="0.7" fill="#6e3e80" transform="rotate(157 60.2 69.1)"/><ellipse cx="191.0" cy="131.5" rx="2.2" ry="1.1" fill="#6e3e80" transform="rotate(83 191.0 131.5)"/><ellipse cx="37.0" cy="91.6" rx="2.4" ry="1.2" fill="#6e3e80" transform="rotate(177 37.0 91.6)"/><ellipse cx="16.8" cy="103.8" rx="2.5" ry="0.8" fill="#6e3e80" transform="rotate(88 16.8 103.8)"/><ellipse cx="108.7" cy="32.7" rx="2.2" ry="0.7" fill="#6e3e80" transform="rotate(145 108.7 32.7)"/><ellipse cx="61.3" cy="32.2" rx="2.1" ry="0.7" fill="#6e3e80" transform="rotate(114 61.3 32.2)"/><ellipse cx="188.3" cy="136.9" rx="2.0" ry="0.9" fill="#6e3e80" transform="rotate(79 188.3 136.9)"/><ellipse cx="120.0" cy="67.5" rx="2.2" ry="0.8" fill="#6e3e80" transform="rotate(79 120.0 67.5)"/><ellipse cx="59.1" cy="111.0" rx="1.3" ry="1.2" fill="#6e3e80" transform="rotate(40 59.1 111.0)"/><ellipse cx="31.6" cy="65.0" rx="1.6" ry="0.9" fill="#6e3e80" transform="rotate(56 31.6 65.0)"/><ellipse cx="106.4" cy="32.0" rx="1.3" ry="0.7" fill="#6e3e80" transform="rotate(96 106.4 32.0)"/><ellipse cx="40.0" cy="43.4" rx="1.6" ry="1.1" fill="#6e3e80" transform="rotate(61 40.0 43.4)"/><ellipse cx="130.3" cy="77.0" rx="2.2" ry="0.9" fill="#6e3e80" transform="rotate(139 130.3 77.0)"/><ellipse cx="121.9" cy="109.9" rx="2.3" ry="1.0" fill="#6e3e80" transform="rotate(96 121.9 109.9)"/><ellipse cx="183.7" cy="54.6" rx="2.6" ry="1.0" fill="#6e3e80" transform="rotate(121 183.7 54.6)"/><ellipse cx="179.2" cy="34.4" rx="1.6" ry="1.1" fill="#6e3e80" transform="rotate(130 179.2 34.4)"/><ellipse cx="83.8" cy="82.9" rx="1.6" ry="1.1" fill="#6e3e80" transform="rotate(45 83.8 82.9)"/><ellipse cx="127.4" cy="95.8" rx="1.6" ry="1.2" fill="#6e3e80" transform="rotate(21 127.4 95.8)"/><ellipse cx="40.2" cy="81.7" rx="1.9" ry="1.0" fill="#6e3e80" transform="rotate(125 40.2 81.7)"/><ellipse cx="192.1" cy="115.5" rx="1.8" ry="0.9" fill="#6e3e80" transform="rotate(43 192.1 115.5)"/><ellipse cx="135.4" cy="101.6" rx="2.2" ry="0.9" fill="#6e3e80" transform="rotate(47 135.4 101.6)"/><ellipse cx="3.0" cy="48.0" rx="1.5" ry="1.0" fill="#6e3e80" transform="rotate(68 3.0 48.0)"/><ellipse cx="196.5" cy="133.0" rx="2.4" ry="0.9" fill="#6e3e80" transform="rotate(113 196.5 133.0)"/><ellipse cx="116.1" cy="128.0" rx="1.7" ry="0.9" fill="#6e3e80" transform="rotate(11 116.1 128.0)"/><ellipse cx="67.5" cy="68.7" rx="2.2" ry="1.2" fill="#6e3e80" transform="rotate(10 67.5 68.7)"/><ellipse cx="46.4" cy="36.8" rx="2.3" ry="0.8" fill="#6e3e80" transform="rotate(60 46.4 36.8)"/><ellipse cx="152.6" cy="41.9" rx="2.2" ry="1.0" fill="#6e3e80" transform="rotate(107 152.6 41.9)"/><ellipse cx="16.7" cy="135.4" rx="1.9" ry="1.1" fill="#6e3e80" transform="rotate(153 16.7 135.4)"/><ellipse cx="119.0" cy="39.3" rx="2.3" ry="0.9" fill="#6e3e80" transform="rotate(71 119.0 39.3)"/><ellipse cx="8.3" cy="31.8" rx="2.0" ry="1.0" fill="#6e3e80" transform="rotate(34 8.3 31.8)"/><ellipse cx="88.7" cy="66.7" rx="1.7" ry="1.0" fill="#6e3e80" transform="rotate(173 88.7 66.7)"/><ellipse cx="40.5" cy="78.6" rx="1.4" ry="0.9" fill="#6e3e80" transform="rotate(32 40.5 78.6)"/><ellipse cx="22.8" cy="60.7" rx="2.0" ry="1.1" fill="#6e3e80" transform="rotate(118 22.8 60.7)"/><ellipse cx="94.5" cy="27.2" rx="1.8" ry="1.1" fill="#6e3e80" transform="rotate(131 94.5 27.2)"/><ellipse cx="193.1" cy="85.5" rx="1.7" ry="0.9" fill="#6e3e80" transform="rotate(45 193.1 85.5)"/><ellipse cx="63.2" cy="27.2" rx="2.1" ry="1.1" fill="#6e3e80" transform="rotate(72 63.2 27.2)"/><ellipse cx="150.8" cy="127.1" rx="1.8" ry="1.0" fill="#6e3e80" transform="rotate(144 150.8 127.1)"/><ellipse cx="10.7" cy="114.1" rx="1.6" ry="0.9" fill="#6e3e80" transform="rotate(127 10.7 114.1)"/><ellipse cx="53.8" cy="114.9" rx="2.3" ry="1.2" fill="#6e3e80" transform="rotate(77 53.8 114.9)"/><ellipse cx="154.0" cy="66.8" rx="2.5" ry="1.2" fill="#6e3e80" transform="rotate(62 154.0 66.8)"/><ellipse cx="37.6" cy="59.0" rx="2.3" ry="0.8" fill="#6e3e80" transform="rotate(142 37.6 59.0)"/><ellipse cx="88.4" cy="136.2" rx="1.6" ry="1.0" fill="#6e3e80" transform="rotate(16 88.4 136.2)"/><ellipse cx="179.7" cy="134.7" rx="2.3" ry="1.2" fill="#6e3e80" transform="rotate(84 179.7 134.7)"/><ellipse cx="65.2" cy="43.3" rx="2.3" ry="0.8" fill="#6e3e80" transform="rotate(47 65.2 43.3)"/><ellipse cx="108.2" cy="132.4" rx="2.1" ry="1.0" fill="#6e3e80" transform="rotate(36 108.2 132.4)"/><ellipse cx="191.3" cy="84.2" rx="2.5" ry="1.1" fill="#6e3e80" transform="rotate(88 191.3 84.2)"/><ellipse cx="28.7" cy="115.6" rx="2.6" ry="1.2" fill="#6e3e80" transform="rotate(72 28.7 115.6)"/><ellipse cx="97.7" cy="68.6" rx="1.6" ry="0.8" fill="#6e3e80" transform="rotate(41 97.7 68.6)"/><ellipse cx="33.3" cy="106.2" rx="2.0" ry="1.0" fill="#6e3e80" transform="rotate(9 33.3 106.2)"/><ellipse cx="145.6" cy="89.0" rx="1.6" ry="0.7" fill="#6e3e80" transform="rotate(167 145.6 89.0)"/><ellipse cx="115.3" cy="51.4" rx="2.5" ry="1.0" fill="#6e3e80" transform="rotate(178 115.3 51.4)"/><ellipse cx="165.1" cy="51.2" rx="1.7" ry="0.9" fill="#6e3e80" transform="rotate(87 165.1 51.2)"/><ellipse cx="74.0" cy="75.3" rx="1.2" ry="1.0" fill="#6e3e80" transform="rotate(118 74.0 75.3)"/><ellipse cx="25.3" cy="136.9" rx="2.0" ry="0.9" fill="#6e3e80" transform="rotate(99 25.3 136.9)"/><ellipse cx="139.7" cy="106.0" rx="2.0" ry="0.8" fill="#6e3e80" transform="rotate(164 139.7 106.0)"/><ellipse cx="124.5" cy="25.2" rx="1.6" ry="1.1" fill="#6e3e80" transform="rotate(134 124.5 25.2)"/><ellipse cx="26.1" cy="88.9" rx="1.3" ry="0.8" fill="#6e3e80" transform="rotate(30 26.1 88.9)"/><ellipse cx="168.0" cy="68.5" rx="2.3" ry="1.2" fill="#6e3e80" transform="rotate(94 168.0 68.5)"/><ellipse cx="51.3" cy="102.0" rx="2.3" ry="0.9" fill="#6e3e80" transform="rotate(141 51.3 102.0)"/><ellipse cx="93.9" cy="114.1" rx="1.9" ry="1.0" fill="#6e3e80" transform="rotate(45 93.9 114.1)"/><ellipse cx="168.5" cy="51.4" rx="1.5" ry="0.8" fill="#6e3e80" transform="rotate(120 168.5 51.4)"/><ellipse cx="94.5" cy="97.2" rx="2.5" ry="0.8" fill="#6e3e80" transform="rotate(115 94.5 97.2)"/><ellipse cx="105.0" cy="76.8" rx="2.5" ry="0.8" fill="#6e3e80" transform="rotate(47 105.0 76.8)"/><ellipse cx="51.6" cy="18.6" rx="2.1" ry="0.8" fill="#6e3e80" transform="rotate(116 51.6 18.6)"/><ellipse cx="182.5" cy="98.1" rx="2.5" ry="1.1" fill="#6e3e80" transform="rotate(36 182.5 98.1)"/><ellipse cx="62.1" cy="123.9" rx="1.7" ry="0.9" fill="#6e3e80" transform="rotate(23 62.1 123.9)"/><ellipse cx="189.1" cy="59.0" rx="1.5" ry="1.1" fill="#6e3e80" transform="rotate(69 189.1 59.0)"/><ellipse cx="36.3" cy="121.4" rx="2.0" ry="1.1" fill="#6e3e80" transform="rotate(61 36.3 121.4)"/><ellipse cx="52.8" cy="80.9" rx="2.0" ry="0.9" fill="#6e3e80" transform="rotate(114 52.8 80.9)"/><ellipse cx="127.9" cy="57.6" rx="1.2" ry="1.0" fill="#6e3e80" transform="rotate(28 127.9 57.6)"/><ellipse cx="113.7" cy="116.4" rx="2.1" ry="0.9" fill="#6e3e80" transform="rotate(28 113.7 116.4)"/><ellipse cx="104.0" cy="120.2" rx="1.8" ry="1.0" fill="#6e3e80" transform="rotate(93 104.0 120.2)"/><ellipse cx="29.3" cy="124.6" rx="1.3" ry="0.9" fill="#6e3e80" transform="rotate(93 29.3 124.6)"/><ellipse cx="187.2" cy="138.5" rx="1.6" ry="1.2" fill="#6e3e80" transform="rotate(77 187.2 138.5)"/><ellipse cx="56.3" cy="16.1" rx="1.9" ry="1.0" fill="#6e3e80" transform="rotate(44 56.3 16.1)"/><ellipse cx="13.2" cy="54.1" rx="1.7" ry="0.8" fill="#6e3e80" transform="rotate(131 13.2 54.1)"/><ellipse cx="140.8" cy="73.0" rx="1.9" ry="1.1" fill="#6e3e80" transform="rotate(125 140.8 73.0)"/><ellipse cx="101.4" cy="137.9" rx="2.2" ry="0.9" fill="#6e3e80" transform="rotate(146 101.4 137.9)"/><ellipse cx="120.7" cy="64.8" rx="2.4" ry="1.1" fill="#6e3e80" transform="rotate(14 120.7 64.8)"/><ellipse cx="151.9" cy="124.1" rx="2.6" ry="0.9" fill="#6e3e80" transform="rotate(99 151.9 124.1)"/><ellipse cx="194.2" cy="33.9" rx="2.0" ry="1.1" fill="#6e3e80" transform="rotate(68 194.2 33.9)"/><ellipse cx="103.1" cy="115.1" rx="2.1" ry="1.1" fill="#6e3e80" transform="rotate(67 103.1 115.1)"/><ellipse cx="118.8" cy="21.2" rx="1.2" ry="0.9" fill="#6e3e80" transform="rotate(118 118.8 21.2)"/><ellipse cx="22.7" cy="110.3" rx="2.2" ry="0.7" fill="#6e3e80" transform="rotate(30 22.7 110.3)"/><ellipse cx="41.0" cy="101.9" rx="1.3" ry="1.0" fill="#6e3e80" transform="rotate(166 41.0 101.9)"/><ellipse cx="78.7" cy="93.6" rx="1.2" ry="0.7" fill="#6e3e80" transform="rotate(14 78.7 93.6)"/><ellipse cx="176.4" cy="80.9" rx="1.4" ry="1.0" fill="#6e3e80" transform="rotate(110 176.4 80.9)"/><ellipse cx="178.4" cy="46.5" rx="2.4" ry="1.2" fill="#6e3e80" transform="rotate(141 178.4 46.5)"/><ellipse cx="112.0" cy="97.4" rx="2.3" ry="0.9" fill="#6e3e80" transform="rotate(62 112.0 97.4)"/><ellipse cx="123.5" cy="95.5" rx="2.3" ry="0.7" fill="#6e3e80" transform="rotate(178 123.5 95.5)"/><ellipse cx="35.1" cy="58.2" rx="2.2" ry="0.8" fill="#6e3e80" transform="rotate(71 35.1 58.2)"/><ellipse cx="110.7" cy="73.6" rx="2.1" ry="0.9" fill="#6e3e80" transform="rotate(55 110.7 73.6)"/><ellipse cx="194.0" cy="39.5" rx="2.1" ry="0.9" fill="#6e3e80" transform="rotate(162 194.0 39.5)"/><ellipse cx="15.4" cy="95.0" rx="1.7" ry="1.1" fill="#6e3e80" transform="rotate(145 15.4 95.0)"/><ellipse cx="105.3" cy="28.7" rx="1.6" ry="0.9" fill="#6e3e80" transform="rotate(155 105.3 28.7)"/><ellipse cx="150.8" cy="126.1" rx="1.7" ry="1.1" fill="#6e3e80" transform="rotate(154 150.8 126.1)"/><ellipse cx="30.3" cy="83.1" rx="2.4" ry="1.1" fill="#6e3e80" transform="rotate(78 30.3 83.1)"/><ellipse cx="130.5" cy="118.0" rx="1.8" ry="0.8" fill="#6e3e80" transform="rotate(63 130.5 118.0)"/><ellipse cx="69.4" cy="40.0" rx="1.4" ry="1.2" fill="#6e3e80" transform="rotate(132 69.4 40.0)"/><ellipse cx="118.8" cy="73.2" rx="1.8" ry="1.0" fill="#6e3e80" transform="rotate(21 118.8 73.2)"/><ellipse cx="28.5" cy="138.0" rx="1.8" ry="0.8" fill="#6e3e80" transform="rotate(65 28.5 138.0)"/><ellipse cx="73.9" cy="50.0" rx="1.3" ry="0.9" fill="#6e3e80" transform="rotate(154 73.9 50.0)"/><ellipse cx="118.3" cy="77.3" rx="1.9" ry="0.7" fill="#6e3e80" transform="rotate(58 118.3 77.3)"/><ellipse cx="60.8" cy="69.4" rx="1.8" ry="0.9" fill="#6e3e80" transform="rotate(138 60.8 69.4)"/><ellipse cx="129.5" cy="53.1" rx="1.5" ry="1.0" fill="#6e3e80" transform="rotate(99 129.5 53.1)"/><ellipse cx="106.7" cy="98.3" rx="2.3" ry="1.2" fill="#6e3e80" transform="rotate(157 106.7 98.3)"/><ellipse cx="46.2" cy="135.1" rx="1.7" ry="0.9" fill="#6e3e80" transform="rotate(80 46.2 135.1)"/><ellipse cx="182.4" cy="135.6" rx="1.6" ry="0.8" fill="#6e3e80" transform="rotate(145 182.4 135.6)"/><ellipse cx="40.3" cy="98.9" rx="1.3" ry="0.7" fill="#6e3e80" transform="rotate(126 40.3 98.9)"/><ellipse cx="197.0" cy="64.0" rx="1.9" ry="0.7" fill="#6e3e80" transform="rotate(8 197.0 64.0)"/><ellipse cx="161.4" cy="85.0" rx="2.5" ry="0.8" fill="#6e3e80" transform="rotate(110 161.4 85.0)"/><ellipse cx="42.6" cy="113.7" rx="1.8" ry="0.9" fill="#6e3e80" transform="rotate(109 42.6 113.7)"/><ellipse cx="122.6" cy="134.2" rx="2.5" ry="1.2" fill="#6e3e80" transform="rotate(171 122.6 134.2)"/><ellipse cx="26.1" cy="15.2" rx="1.5" ry="1.0" fill="#6e3e80" transform="rotate(149 26.1 15.2)"/><ellipse cx="92.7" cy="137.7" rx="1.4" ry="0.8" fill="#6e3e80" transform="rotate(80 92.7 137.7)"/><ellipse cx="178.9" cy="119.3" rx="2.5" ry="0.9" fill="#6e3e80" transform="rotate(25 178.9 119.3)"/><ellipse cx="144.0" cy="88.6" rx="1.9" ry="0.7" fill="#6e3e80" transform="rotate(154 144.0 88.6)"/><ellipse cx="110.4" cy="122.7" rx="2.4" ry="0.9" fill="#6e3e80" transform="rotate(74 110.4 122.7)"/><ellipse cx="71.1" cy="60.2" rx="1.9" ry="1.2" fill="#6e3e80" transform="rotate(41 71.1 60.2)"/><ellipse cx="117.0" cy="112.5" rx="1.7" ry="1.0" fill="#6e3e80" transform="rotate(32 117.0 112.5)"/><ellipse cx="76.0" cy="16.4" rx="1.4" ry="1.0" fill="#6e3e80" transform="rotate(156 76.0 16.4)"/><ellipse cx="194.2" cy="58.2" rx="1.7" ry="1.0" fill="#6e3e80" transform="rotate(49 194.2 58.2)"/><ellipse cx="194.0" cy="41.3" rx="2.5" ry="0.8" fill="#6e3e80" transform="rotate(44 194.0 41.3)"/><ellipse cx="132.1" cy="107.2" rx="1.2" ry="1.1" fill="#6e3e80" transform="rotate(0 132.1 107.2)"/><ellipse cx="181.9" cy="105.1" rx="1.3" ry="1.0" fill="#6e3e80" transform="rotate(84 181.9 105.1)"/><ellipse cx="21.7" cy="53.3" rx="1.9" ry="0.9" fill="#6e3e80" transform="rotate(6 21.7 53.3)"/><ellipse cx="56.3" cy="42.0" rx="1.2" ry="0.8" fill="#6e3e80" transform="rotate(12 56.3 42.0)"/><ellipse cx="194.5" cy="28.3" rx="1.8" ry="1.0" fill="#6e3e80" transform="rotate(129 194.5 28.3)"/><ellipse cx="60.3" cy="138.6" rx="1.8" ry="0.9" fill="#6e3e80" transform="rotate(145 60.3 138.6)"/><ellipse cx="181.8" cy="41.9" rx="2.1" ry="1.0" fill="#6e3e80" transform="rotate(157 181.8 41.9)"/><ellipse cx="105.5" cy="90.5" rx="1.5" ry="0.9" fill="#6e3e80" transform="rotate(16 105.5 90.5)"/><ellipse cx="43.8" cy="23.8" rx="1.8" ry="1.1" fill="#6e3e80" transform="rotate(128 43.8 23.8)"/><ellipse cx="77.6" cy="133.7" rx="1.9" ry="0.9" fill="#6e3e80" transform="rotate(44 77.6 133.7)"/><ellipse cx="156.6" cy="37.2" rx="1.8" ry="1.0" fill="#6e3e80" transform="rotate(98 156.6 37.2)"/><ellipse cx="46.1" cy="82.5" rx="1.3" ry="1.2" fill="#6e3e80" transform="rotate(177 46.1 82.5)"/><ellipse cx="191.4" cy="76.6" rx="1.9" ry="1.2" fill="#6e3e80" transform="rotate(15 191.4 76.6)"/><ellipse cx="0.2" cy="108.5" rx="1.4" ry="1.0" fill="#6e3e80" transform="rotate(140 0.2 108.5)"/><ellipse cx="29.4" cy="24.6" rx="1.6" ry="1.0" fill="#6e3e80" transform="rotate(94 29.4 24.6)"/><ellipse cx="104.3" cy="45.9" rx="1.2" ry="1.1" fill="#6e3e80" transform="rotate(166 104.3 45.9)"/><ellipse cx="55.8" cy="128.2" rx="1.8" ry="0.8" fill="#6e3e80" transform="rotate(109 55.8 128.2)"/><ellipse cx="169.6" cy="124.2" rx="2.0" ry="1.2" fill="#6e3e80" transform="rotate(173 169.6 124.2)"/><ellipse cx="177.2" cy="101.7" rx="2.0" ry="0.9" fill="#6e3e80" transform="rotate(61 177.2 101.7)"/><ellipse cx="161.1" cy="87.8" rx="2.4" ry="1.1" fill="#6e3e80" transform="rotate(156 161.1 87.8)"/><ellipse cx="40.2" cy="55.6" rx="1.7" ry="0.8" fill="#6e3e80" transform="rotate(15 40.2 55.6)"/><ellipse cx="59.4" cy="114.8" rx="2.5" ry="1.2" fill="#6e3e80" transform="rotate(22 59.4 114.8)"/><ellipse cx="152.7" cy="49.8" rx="1.8" ry="1.0" fill="#6e3e80" transform="rotate(52 152.7 49.8)"/><ellipse cx="183.3" cy="26.0" rx="2.4" ry="0.7" fill="#6e3e80" transform="rotate(16 183.3 26.0)"/><ellipse cx="176.9" cy="45.1" rx="1.9" ry="1.0" fill="#6e3e80" transform="rotate(176 176.9 45.1)"/><ellipse cx="163.4" cy="120.0" rx="1.8" ry="1.1" fill="#6e3e80" transform="rotate(75 163.4 120.0)"/><ellipse cx="50.7" cy="52.3" rx="2.4" ry="1.1" fill="#6e3e80" transform="rotate(157 50.7 52.3)"/><ellipse cx="68.1" cy="58.0" rx="2.4" ry="0.7" fill="#6e3e80" transform="rotate(19 68.1 58.0)"/><ellipse cx="36.3" cy="15.4" rx="2.6" ry="0.7" fill="#6e3e80" transform="rotate(82 36.3 15.4)"/><ellipse cx="49.9" cy="47.6" rx="1.7" ry="0.8" fill="#6e3e80" transform="rotate(126 49.9 47.6)"/><ellipse cx="137.0" cy="128.9" rx="1.3" ry="0.9" fill="#6e3e80" transform="rotate(30 137.0 128.9)"/><ellipse cx="185.1" cy="30.7" rx="2.1" ry="1.1" fill="#6e3e80" transform="rotate(25 185.1 30.7)"/><ellipse cx="89.5" cy="22.0" rx="1.3" ry="0.7" fill="#6e3e80" transform="rotate(99 89.5 22.0)"/><ellipse cx="11.2" cy="132.8" rx="1.9" ry="1.1" fill="#6e3e80" transform="rotate(18 11.2 132.8)"/><ellipse cx="39.7" cy="62.6" rx="2.0" ry="0.8" fill="#6e3e80" transform="rotate(143 39.7 62.6)"/><ellipse cx="106.3" cy="140.4" rx="2.5" ry="0.7" fill="#6e3e80" transform="rotate(147 106.3 140.4)"/><ellipse cx="11.5" cy="76.0" rx="2.5" ry="0.8" fill="#6e3e80" transform="rotate(2 11.5 76.0)"/><ellipse cx="108.8" cy="125.9" rx="2.3" ry="0.8" fill="#6e3e80" transform="rotate(77 108.8 125.9)"/><ellipse cx="88.1" cy="106.9" rx="1.5" ry="1.1" fill="#6e3e80" transform="rotate(84 88.1 106.9)"/><ellipse cx="70.8" cy="130.0" rx="2.4" ry="0.8" fill="#6e3e80" transform="rotate(57 70.8 130.0)"/><ellipse cx="133.6" cy="135.1" rx="1.8" ry="1.2" fill="#6e3e80" transform="rotate(113 133.6 135.1)"/><ellipse cx="191.3" cy="120.2" rx="1.3" ry="1.0" fill="#6e3e80" transform="rotate(40 191.3 120.2)"/><ellipse cx="26.5" cy="19.4" rx="2.5" ry="0.8" fill="#6e3e80" transform="rotate(100 26.5 19.4)"/><ellipse cx="162.6" cy="136.3" rx="1.3" ry="0.8" fill="#6e3e80" transform="rotate(169 162.6 136.3)"/><ellipse cx="189.1" cy="136.9" rx="1.5" ry="1.1" fill="#6e3e80" transform="rotate(31 189.1 136.9)"/><ellipse cx="19.2" cy="24.5" rx="2.0" ry="0.9" fill="#6e3e80" transform="rotate(29 19.2 24.5)"/><ellipse cx="166.8" cy="40.5" rx="2.3" ry="0.9" fill="#6e3e80" transform="rotate(161 166.8 40.5)"/><ellipse cx="119.7" cy="101.5" rx="2.5" ry="0.9" fill="#6e3e80" transform="rotate(22 119.7 101.5)"/><ellipse cx="101.9" cy="122.7" rx="1.6" ry="0.7" fill="#6e3e80" transform="rotate(4 101.9 122.7)"/><ellipse cx="145.8" cy="47.0" rx="2.2" ry="1.2" fill="#6e3e80" transform="rotate(129 145.8 47.0)"/><ellipse cx="35.7" cy="65.5" rx="1.8" ry="0.8" fill="#6e3e80" transform="rotate(142 35.7 65.5)"/><ellipse cx="133.6" cy="116.1" rx="1.7" ry="0.8" fill="#6e3e80" transform="rotate(81 133.6 116.1)"/><ellipse cx="80.4" cy="121.0" rx="2.5" ry="0.9" fill="#6e3e80" transform="rotate(64 80.4 121.0)"/><ellipse cx="94.3" cy="113.5" rx="2.4" ry="0.9" fill="#6e3e80" transform="rotate(164 94.3 113.5)"/><ellipse cx="89.4" cy="32.5" rx="2.3" ry="0.8" fill="#6e3e80" transform="rotate(97 89.4 32.5)"/><ellipse cx="62.5" cy="22.6" rx="1.9" ry="1.2" fill="#6e3e80" transform="rotate(82 62.5 22.6)"/><ellipse cx="132.7" cy="131.0" rx="1.8" ry="1.1" fill="#6e3e80" transform="rotate(36 132.7 131.0)"/><ellipse cx="14.7" cy="85.1" rx="1.2" ry="0.8" fill="#6e3e80" transform="rotate(113 14.7 85.1)"/><ellipse cx="155.2" cy="40.8" rx="1.8" ry="0.9" fill="#6e3e80" transform="rotate(115 155.2 40.8)"/><ellipse cx="173.4" cy="69.7" rx="2.3" ry="1.0" fill="#6e3e80" transform="rotate(158 173.4 69.7)"/><ellipse cx="20.1" cy="54.4" rx="1.6" ry="1.0" fill="#6e3e80" transform="rotate(172 20.1 54.4)"/><ellipse cx="39.8" cy="106.6" rx="2.4" ry="1.0" fill="#6e3e80" transform="rotate(124 39.8 106.6)"/><ellipse cx="21.9" cy="114.5" rx="2.5" ry="1.0" fill="#6e3e80" transform="rotate(104 21.9 114.5)"/><ellipse cx="64.2" cy="70.5" rx="2.2" ry="1.0" fill="#6e3e80" transform="rotate(101 64.2 70.5)"/><ellipse cx="170.6" cy="86.1" rx="2.4" ry="1.1" fill="#6e3e80" transform="rotate(37 170.6 86.1)"/><ellipse cx="31.3" cy="71.4" rx="2.0" ry="0.8" fill="#6e3e80" transform="rotate(153 31.3 71.4)"/><ellipse cx="171.4" cy="109.2" rx="2.2" ry="1.1" fill="#6e3e80" transform="rotate(35 171.4 109.2)"/><ellipse cx="114.0" cy="134.6" rx="1.2" ry="1.0" fill="#6e3e80" transform="rotate(97 114.0 134.6)"/><ellipse cx="164.4" cy="131.1" rx="2.5" ry="1.1" fill="#6e3e80" transform="rotate(136 164.4 131.1)"/><ellipse cx="93.8" cy="24.2" rx="1.3" ry="1.2" fill="#6e3e80" transform="rotate(30 93.8 24.2)"/><ellipse cx="159.9" cy="129.8" rx="1.8" ry="1.0" fill="#6e3e80" transform="rotate(140 159.9 129.8)"/><ellipse cx="5.0" cy="30.9" rx="1.3" ry="0.9" fill="#6e3e80" transform="rotate(72 5.0 30.9)"/><ellipse cx="102.7" cy="37.4" rx="1.3" ry="0.9" fill="#6e3e80" transform="rotate(32 102.7 37.4)"/><ellipse cx="165.7" cy="75.4" rx="2.2" ry="1.1" fill="#6e3e80" transform="rotate(127 165.7 75.4)"/><ellipse cx="157.6" cy="81.4" rx="1.4" ry="0.8" fill="#6e3e80" transform="rotate(8 157.6 81.4)"/><ellipse cx="66.7" cy="90.3" rx="1.6" ry="0.8" fill="#6e3e80" transform="rotate(90 66.7 90.3)"/><ellipse cx="146.2" cy="140.5" rx="1.4" ry="1.0" fill="#6e3e80" transform="rotate(126 146.2 140.5)"/><ellipse cx="158.3" cy="85.9" rx="2.4" ry="0.9" fill="#6e3e80" transform="rotate(114 158.3 85.9)"/><ellipse cx="139.9" cy="40.7" rx="2.0" ry="0.8" fill="#6e3e80" transform="rotate(151 139.9 40.7)"/><ellipse cx="123.7" cy="119.6" rx="1.6" ry="1.1" fill="#6e3e80" transform="rotate(80 123.7 119.6)"/><ellipse cx="197.0" cy="136.5" rx="1.9" ry="0.9" fill="#6e3e80" transform="rotate(56 197.0 136.5)"/><ellipse cx="28.2" cy="82.3" rx="1.9" ry="1.1" fill="#6e3e80" transform="rotate(52 28.2 82.3)"/><ellipse cx="110.0" cy="139.7" rx="1.5" ry="0.7" fill="#6e3e80" transform="rotate(37 110.0 139.7)"/><ellipse cx="139.8" cy="54.8" rx="2.1" ry="1.2" fill="#6e3e80" transform="rotate(39 139.8 54.8)"/><ellipse cx="149.1" cy="135.8" rx="1.9" ry="0.8" fill="#6e3e80" transform="rotate(168 149.1 135.8)"/><ellipse cx="151.4" cy="47.3" rx="1.7" ry="1.1" fill="#6e3e80" transform="rotate(13 151.4 47.3)"/><ellipse cx="125.3" cy="69.2" rx="1.4" ry="1.0" fill="#6e3e80" transform="rotate(23 125.3 69.2)"/><ellipse cx="97.9" cy="84.3" rx="2.0" ry="1.1" fill="#6e3e80" transform="rotate(134 97.9 84.3)"/><ellipse cx="182.1" cy="84.5" rx="1.9" ry="0.8" fill="#6e3e80" transform="rotate(65 182.1 84.5)"/><ellipse cx="34.7" cy="105.0" rx="1.2" ry="0.9" fill="#6e3e80" transform="rotate(79 34.7 105.0)"/><ellipse cx="63.6" cy="22.1" rx="2.1" ry="1.1" fill="#6e3e80" transform="rotate(4 63.6 22.1)"/><ellipse cx="166.1" cy="93.2" rx="2.1" ry="0.8" fill="#6e3e80" transform="rotate(41 166.1 93.2)"/><ellipse cx="45.7" cy="55.1" rx="1.4" ry="1.2" fill="#6e3e80" transform="rotate(24 45.7 55.1)"/><ellipse cx="16.7" cy="137.2" rx="2.2" ry="0.8" fill="#6e3e80" transform="rotate(125 16.7 137.2)"/><ellipse cx="134.7" cy="44.1" rx="1.8" ry="1.2" fill="#6e3e80" transform="rotate(91 134.7 44.1)"/><ellipse cx="19.9" cy="12.0" rx="1.9" ry="1.0" fill="#6e3e80" transform="rotate(105 19.9 12.0)"/><ellipse cx="17.1" cy="59.1" rx="2.0" ry="0.9" fill="#6e3e80" transform="rotate(128 17.1 59.1)"/><ellipse cx="1.6" cy="15.4" rx="1.6" ry="0.7" fill="#6e3e80" transform="rotate(161 1.6 15.4)"/><ellipse cx="57.8" cy="40.8" rx="1.3" ry="1.0" fill="#6e3e80" transform="rotate(98 57.8 40.8)"/><ellipse cx="128.0" cy="84.6" rx="1.5" ry="0.9" fill="#6e3e80" transform="rotate(107 128.0 84.6)"/><ellipse cx="148.1" cy="55.2" rx="1.5" ry="0.9" fill="#6e3e80" transform="rotate(149 148.1 55.2)"/><ellipse cx="177.6" cy="101.4" rx="1.7" ry="0.8" fill="#6e3e80" transform="rotate(50 177.6 101.4)"/><ellipse cx="148.8" cy="64.8" rx="2.2" ry="1.1" fill="#6e3e80" transform="rotate(151 148.8 64.8)"/><ellipse cx="105.0" cy="52.4" rx="1.8" ry="0.7" fill="#6e3e80" transform="rotate(124 105.0 52.4)"/><ellipse cx="89.1" cy="39.6" rx="1.6" ry="1.2" fill="#6e3e80" transform="rotate(13 89.1 39.6)"/><ellipse cx="132.5" cy="72.3" rx="1.7" ry="1.0" fill="#6e3e80" transform="rotate(105 132.5 72.3)"/><ellipse cx="51.6" cy="122.5" rx="1.8" ry="1.0" fill="#6e3e80" transform="rotate(143 51.6 122.5)"/><ellipse cx="73.8" cy="112.2" rx="2.5" ry="0.8" fill="#6e3e80" transform="rotate(150 73.8 112.2)"/><ellipse cx="179.7" cy="49.0" rx="1.8" ry="1.0" fill="#6e3e80" transform="rotate(20 179.7 49.0)"/><ellipse cx="22.8" cy="94.8" rx="2.3" ry="1.1" fill="#6e3e80" transform="rotate(174 22.8 94.8)"/><ellipse cx="31.4" cy="55.4" rx="1.7" ry="1.1" fill="#6e3e80" transform="rotate(44 31.4 55.4)"/><ellipse cx="197.3" cy="55.4" rx="2.1" ry="1.2" fill="#6e3e80" transform="rotate(101 197.3 55.4)"/><ellipse cx="89.0" cy="31.0" rx="1.4" ry="0.9" fill="#6e3e80" transform="rotate(18 89.0 31.0)"/><ellipse cx="18.3" cy="101.0" rx="1.3" ry="1.1" fill="#6e3e80" transform="rotate(35 18.3 101.0)"/><ellipse cx="91.6" cy="110.6" rx="1.7" ry="0.7" fill="#6e3e80" transform="rotate(104 91.6 110.6)"/><ellipse cx="169.0" cy="103.0" rx="1.3" ry="1.0" fill="#6e3e80" transform="rotate(47 169.0 103.0)"/><ellipse cx="184.2" cy="110.8" rx="2.6" ry="0.8" fill="#6e3e80" transform="rotate(166 184.2 110.8)"/><ellipse cx="36.5" cy="72.3" rx="1.9" ry="1.1" fill="#6e3e80" transform="rotate(20 36.5 72.3)"/><ellipse cx="51.6" cy="117.7" rx="2.3" ry="0.7" fill="#6e3e80" transform="rotate(46 51.6 117.7)"/><ellipse cx="23.6" cy="17.3" rx="1.2" ry="1.0" fill="#6e3e80" transform="rotate(104 23.6 17.3)"/><ellipse cx="82.7" cy="129.1" rx="2.4" ry="1.1" fill="#6e3e80" transform="rotate(69 82.7 129.1)"/><ellipse cx="74.1" cy="113.2" rx="2.0" ry="0.9" fill="#6e3e80" transform="rotate(108 74.1 113.2)"/><ellipse cx="30.5" cy="79.4" rx="1.8" ry="1.2" fill="#6e3e80" transform="rotate(93 30.5 79.4)"/><ellipse cx="33.9" cy="129.5" rx="1.3" ry="1.0" fill="#6e3e80" transform="rotate(101 33.9 129.5)"/><ellipse cx="37.2" cy="76.1" rx="2.3" ry="1.2" fill="#6e3e80" transform="rotate(86 37.2 76.1)"/><ellipse cx="14.2" cy="124.9" rx="1.4" ry="0.7" fill="#6e3e80" transform="rotate(169 14.2 124.9)"/><ellipse cx="91.9" cy="20.5" rx="1.9" ry="0.8" fill="#6e3e80" transform="rotate(22 91.9 20.5)"/><ellipse cx="118.9" cy="44.1" rx="2.1" ry="0.7" fill="#6e3e80" transform="rotate(120 118.9 44.1)"/><ellipse cx="135.6" cy="131.6" rx="1.3" ry="1.0" fill="#6e3e80" transform="rotate(179 135.6 131.6)"/><ellipse cx="63.2" cy="67.2" rx="1.3" ry="1.0" fill="#6e3e80" transform="rotate(83 63.2 67.2)"/><ellipse cx="25.8" cy="122.3" rx="2.1" ry="1.0" fill="#6e3e80" transform="rotate(18 25.8 122.3)"/><ellipse cx="6.4" cy="24.9" rx="1.7" ry="0.8" fill="#6e3e80" transform="rotate(89 6.4 24.9)"/><ellipse cx="20.0" cy="41.1" rx="1.4" ry="1.1" fill="#6e3e80" transform="rotate(146 20.0 41.1)"/><ellipse cx="22.6" cy="117.2" rx="2.4" ry="0.9" fill="#6e3e80" transform="rotate(139 22.6 117.2)"/><ellipse cx="193.0" cy="72.7" rx="2.4" ry="0.8" fill="#6e3e80" transform="rotate(114 193.0 72.7)"/><ellipse cx="9.0" cy="101.0" rx="1.5" ry="0.9" fill="#6e3e80" transform="rotate(41 9.0 101.0)"/><ellipse cx="34.1" cy="47.0" rx="1.3" ry="1.1" fill="#6e3e80" transform="rotate(36 34.1 47.0)"/><ellipse cx="167.1" cy="109.2" rx="2.5" ry="1.0" fill="#6e3e80" transform="rotate(79 167.1 109.2)"/><ellipse cx="109.8" cy="20.6" rx="1.5" ry="1.0" fill="#6e3e80" transform="rotate(64 109.8 20.6)"/><ellipse cx="190.7" cy="97.5" rx="2.4" ry="0.7" fill="#6e3e80" transform="rotate(57 190.7 97.5)"/><ellipse cx="159.5" cy="26.9" rx="2.3" ry="1.2" fill="#6e3e80" transform="rotate(174 159.5 26.9)"/><ellipse cx="95.5" cy="98.5" rx="2.3" ry="1.0" fill="#6e3e80" transform="rotate(72 95.5 98.5)"/><ellipse cx="90.4" cy="116.5" rx="1.6" ry="0.8" fill="#6e3e80" transform="rotate(169 90.4 116.5)"/><ellipse cx="196.8" cy="63.9" rx="2.0" ry="0.8" fill="#6e3e80" transform="rotate(66 196.8 63.9)"/><ellipse cx="90.3" cy="50.7" rx="2.3" ry="1.1" fill="#6e3e80" transform="rotate(80 90.3 50.7)"/><ellipse cx="184.1" cy="133.2" rx="2.3" ry="1.0" fill="#6e3e80" transform="rotate(48 184.1 133.2)"/><ellipse cx="123.9" cy="78.5" rx="2.0" ry="1.2" fill="#6e3e80" transform="rotate(166 123.9 78.5)"/><ellipse cx="20.9" cy="57.6" rx="2.2" ry="0.9" fill="#6e3e80" transform="rotate(24 20.9 57.6)"/><ellipse cx="63.4" cy="57.1" rx="1.6" ry="0.9" fill="#6e3e80" transform="rotate(87 63.4 57.1)"/><ellipse cx="123.3" cy="21.5" rx="1.9" ry="1.0" fill="#6e3e80" transform="rotate(40 123.3 21.5)"/><ellipse cx="117.3" cy="108.3" rx="2.5" ry="1.1" fill="#6e3e80" transform="rotate(78 117.3 108.3)"/><ellipse cx="99.9" cy="87.8" rx="1.6" ry="0.8" fill="#6e3e80" transform="rotate(145 99.9 87.8)"/><ellipse cx="98.8" cy="79.8" rx="1.9" ry="1.2" fill="#6e3e80" transform="rotate(9 98.8 79.8)"/><ellipse cx="171.3" cy="86.6" rx="1.7" ry="0.7" fill="#6e3e80" transform="rotate(126 171.3 86.6)"/><ellipse cx="162.9" cy="86.2" rx="2.1" ry="1.2" fill="#6e3e80" transform="rotate(110 162.9 86.2)"/><ellipse cx="59.8" cy="86.5" rx="2.2" ry="1.2" fill="#6e3e80" transform="rotate(132 59.8 86.5)"/><ellipse cx="8.1" cy="114.4" rx="1.6" ry="0.9" fill="#6e3e80" transform="rotate(7 8.1 114.4)"/><ellipse cx="158.6" cy="127.8" rx="2.0" ry="1.0" fill="#6e3e80" transform="rotate(100 158.6 127.8)"/><ellipse cx="5.2" cy="58.6" rx="1.3" ry="0.9" fill="#6e3e80" transform="rotate(81 5.2 58.6)"/><ellipse cx="55.4" cy="30.1" rx="1.7" ry="1.0" fill="#6e3e80" transform="rotate(34 55.4 30.1)"/><ellipse cx="168.6" cy="60.3" rx="2.2" ry="0.8" fill="#6e3e80" transform="rotate(142 168.6 60.3)"/><ellipse cx="39.6" cy="125.3" rx="2.1" ry="1.0" fill="#6e3e80" transform="rotate(25 39.6 125.3)"/><ellipse cx="159.7" cy="114.3" rx="1.4" ry="1.1" fill="#6e3e80" transform="rotate(147 159.7 114.3)"/><ellipse cx="177.5" cy="101.6" rx="1.3" ry="0.9" fill="#6e3e80" transform="rotate(172 177.5 101.6)"/><ellipse cx="191.6" cy="59.6" rx="1.6" ry="0.9" fill="#6e3e80" transform="rotate(62 191.6 59.6)"/><ellipse cx="85.4" cy="79.2" rx="1.9" ry="1.2" fill="#6e3e80" transform="rotate(46 85.4 79.2)"/><ellipse cx="69.1" cy="46.3" rx="2.2" ry="1.1" fill="#6e3e80" transform="rotate(165 69.1 46.3)"/><ellipse cx="181.4" cy="139.1" rx="1.2" ry="1.1" fill="#6e3e80" transform="rotate(55 181.4 139.1)"/><ellipse cx="130.8" cy="66.7" rx="2.3" ry="1.0" fill="#6e3e80" transform="rotate(163 130.8 66.7)"/><ellipse cx="121.4" cy="70.0" rx="1.6" ry="1.1" fill="#6e3e80" transform="rotate(33 121.4 70.0)"/><ellipse cx="97.9" cy="81.7" rx="2.5" ry="0.8" fill="#6e3e80" transform="rotate(118 97.9 81.7)"/><ellipse cx="18.5" cy="111.0" rx="2.0" ry="1.0" fill="#6e3e80" transform="rotate(39 18.5 111.0)"/><ellipse cx="132.7" cy="97.2" rx="2.0" ry="1.2" fill="#6e3e80" transform="rotate(72 132.7 97.2)"/><ellipse cx="166.4" cy="76.5" rx="1.6" ry="1.2" fill="#6e3e80" transform="rotate(132 166.4 76.5)"/><ellipse cx="0.6" cy="84.1" rx="2.5" ry="1.0" fill="#6e3e80" transform="rotate(138 0.6 84.1)"/><ellipse cx="101.4" cy="92.4" rx="1.7" ry="1.0" fill="#6e3e80" transform="rotate(136 101.4 92.4)"/><ellipse cx="50.4" cy="23.5" rx="1.5" ry="0.9" fill="#6e3e80" transform="rotate(14 50.4 23.5)"/><ellipse cx="26.1" cy="112.7" rx="1.7" ry="0.8" fill="#6e3e80" transform="rotate(123 26.1 112.7)"/><ellipse cx="82.3" cy="125.0" rx="2.2" ry="0.9" fill="#6e3e80" transform="rotate(151 82.3 125.0)"/><ellipse cx="165.3" cy="82.6" rx="2.5" ry="1.0" fill="#6e3e80" transform="rotate(61 165.3 82.6)"/><ellipse cx="11.2" cy="19.3" rx="2.3" ry="0.9" fill="#6e3e80" transform="rotate(85 11.2 19.3)"/><ellipse cx="105.0" cy="34.4" rx="1.8" ry="0.9" fill="#6e3e80" transform="rotate(109 105.0 34.4)"/><ellipse cx="41.9" cy="88.6" rx="1.9" ry="1.0" fill="#6e3e80" transform="rotate(149 41.9 88.6)"/><ellipse cx="110.2" cy="105.3" rx="1.2" ry="1.2" fill="#6e3e80" transform="rotate(125 110.2 105.3)"/><ellipse cx="97.4" cy="23.1" rx="2.3" ry="0.9" fill="#6e3e80" transform="rotate(130 97.4 23.1)"/><ellipse cx="118.8" cy="23.5" rx="2.1" ry="1.1" fill="#6e3e80" transform="rotate(133 118.8 23.5)"/><ellipse cx="93.8" cy="131.0" rx="1.2" ry="0.7" fill="#6e3e80" transform="rotate(75 93.8 131.0)"/><ellipse cx="64.1" cy="42.9" rx="1.3" ry="1.0" fill="#6e3e80" transform="rotate(42 64.1 42.9)"/><ellipse cx="175.9" cy="132.6" rx="1.9" ry="1.0" fill="#6e3e80" transform="rotate(64 175.9 132.6)"/><ellipse cx="119.1" cy="107.8" rx="1.2" ry="0.9" fill="#6e3e80" transform="rotate(78 119.1 107.8)"/><ellipse cx="2.3" cy="99.3" rx="2.0" ry="1.0" fill="#6e3e80" transform="rotate(174 2.3 99.3)"/><ellipse cx="112.7" cy="137.6" rx="2.0" ry="0.9" fill="#6e3e80" transform="rotate(30 112.7 137.6)"/><ellipse cx="90.7" cy="43.6" rx="1.7" ry="0.8" fill="#6e3e80" transform="rotate(141 90.7 43.6)"/><ellipse cx="169.5" cy="24.7" rx="2.5" ry="1.0" fill="#6e3e80" transform="rotate(34 169.5 24.7)"/><ellipse cx="39.9" cy="29.6" rx="2.4" ry="1.2" fill="#6e3e80" transform="rotate(121 39.9 29.6)"/><ellipse cx="186.5" cy="111.9" rx="2.3" ry="0.9" fill="#6e3e80" transform="rotate(15 186.5 111.9)"/><ellipse cx="105.3" cy="20.5" rx="1.9" ry="1.0" fill="#6e3e80" transform="rotate(2 105.3 20.5)"/><ellipse cx="53.7" cy="136.8" rx="2.4" ry="1.2" fill="#6e3e80" transform="rotate(12 53.7 136.8)"/><ellipse cx="17.5" cy="118.7" rx="1.8" ry="0.9" fill="#6e3e80" transform="rotate(111 17.5 118.7)"/><ellipse cx="108.4" cy="132.0" rx="1.9" ry="0.9" fill="#6e3e80" transform="rotate(136 108.4 132.0)"/><ellipse cx="34.8" cy="82.6" rx="2.1" ry="1.0" fill="#6e3e80" transform="rotate(155 34.8 82.6)"/><ellipse cx="89.5" cy="139.1" rx="1.9" ry="1.0" fill="#6e3e80" transform="rotate(153 89.5 139.1)"/><ellipse cx="159.6" cy="52.4" rx="1.6" ry="1.1" fill="#6e3e80" transform="rotate(113 159.6 52.4)"/><ellipse cx="60.4" cy="136.2" rx="1.9" ry="1.0" fill="#6e3e80" transform="rotate(125 60.4 136.2)"/><ellipse cx="115.6" cy="51.2" rx="1.8" ry="0.8" fill="#6e3e80" transform="rotate(4 115.6 51.2)"/><ellipse cx="93.2" cy="42.9" rx="2.6" ry="0.9" fill="#6e3e80" transform="rotate(37 93.2 42.9)"/><ellipse cx="148.2" cy="37.7" rx="2.2" ry="0.9" fill="#6e3e80" transform="rotate(16 148.2 37.7)"/><ellipse cx="158.5" cy="24.2" rx="2.0" ry="0.8" fill="#6e3e80" transform="rotate(89 158.5 24.2)"/><ellipse cx="141.7" cy="44.1" rx="1.4" ry="0.7" fill="#6e3e80" transform="rotate(20 141.7 44.1)"/><ellipse cx="80.0" cy="113.9" rx="1.6" ry="0.9" fill="#6e3e80" transform="rotate(31 80.0 113.9)"/><ellipse cx="43.7" cy="124.3" rx="1.4" ry="1.0" fill="#6e3e80" transform="rotate(150 43.7 124.3)"/><ellipse cx="179.5" cy="24.8" rx="1.2" ry="0.9" fill="#6e3e80" transform="rotate(72 179.5 24.8)"/><ellipse cx="24.4" cy="70.7" rx="2.2" ry="0.9" fill="#6e3e80" transform="rotate(37 24.4 70.7)"/><ellipse cx="16.5" cy="82.8" rx="2.2" ry="1.1" fill="#6e3e80" transform="rotate(83 16.5 82.8)"/><ellipse cx="49.0" cy="62.3" rx="2.6" ry="1.0" fill="#6e3e80" transform="rotate(130 49.0 62.3)"/><ellipse cx="120.9" cy="59.6" rx="1.6" ry="0.9" fill="#6e3e80" transform="rotate(78 120.9 59.6)"/></g><g filter="url(#hb)"><circle cx="22.2" cy="33.1" r="10.4" fill="#e4919f"/><circle cx="39.2" cy="36.4" r="9.4" fill="#e4919f"/><circle cx="7.2" cy="53.0" r="8.6" fill="#e4919f"/><circle cx="31.5" cy="49.4" r="9.8" fill="#e4919f"/><circle cx="49.1" cy="53.7" r="9.1" fill="#e4919f"/><circle cx="69.5" cy="51.2" r="10.1" fill="#e4919f"/><circle cx="89.4" cy="53.7" r="9.4" fill="#e4919f"/><circle cx="107.9" cy="51.1" r="9.6" fill="#e4919f"/><circle cx="133.0" cy="52.2" r="9.5" fill="#e4919f"/><circle cx="149.8" cy="50.5" r="9.9" fill="#e4919f"/><circle cx="168.3" cy="54.2" r="8.6" fill="#e4919f"/><circle cx="189.3" cy="54.4" r="9.5" fill="#e4919f"/><circle cx="208.5" cy="51.8" r="9.6" fill="#e4919f"/><circle cx="2.4" cy="67.7" r="9.9" fill="#e4919f"/><circle cx="20.6" cy="71.3" r="10.1" fill="#e4919f"/><circle cx="38.9" cy="69.7" r="10.2" fill="#e4919f"/><circle cx="59.7" cy="72.8" r="9.3" fill="#e4919f"/><circle cx="99.8" cy="69.6" r="10.4" fill="#e4919f"/><circle cx="141.2" cy="67.1" r="9.1" fill="#e4919f"/><circle cx="161.1" cy="70.8" r="8.9" fill="#e4919f"/><circle cx="182.1" cy="68.7" r="9.6" fill="#e4919f"/><circle cx="202.1" cy="71.8" r="10.1" fill="#e4919f"/><circle cx="11.4" cy="90.4" r="8.7" fill="#e4919f"/><circle cx="29.8" cy="87.3" r="9.8" fill="#e4919f"/><circle cx="52.4" cy="89.8" r="10.4" fill="#e4919f"/><circle cx="70.1" cy="89.2" r="10.3" fill="#e4919f"/><circle cx="131.7" cy="88.7" r="9.3" fill="#e4919f"/><circle cx="147.6" cy="85.8" r="9.9" fill="#e4919f"/><circle cx="170.7" cy="87.6" r="8.9" fill="#e4919f"/><circle cx="192.6" cy="86.7" r="9.3" fill="#e4919f"/><circle cx="2.6" cy="104.0" r="9.1" fill="#e4919f"/><circle cx="21.7" cy="108.2" r="9.8" fill="#e4919f"/><circle cx="40.6" cy="103.2" r="9.8" fill="#e4919f"/><circle cx="62.3" cy="108.5" r="8.8" fill="#e4919f"/><circle cx="83.0" cy="104.5" r="9.1" fill="#e4919f"/><circle cx="98.5" cy="103.9" r="9.9" fill="#e4919f"/><circle cx="120.7" cy="104.5" r="9.0" fill="#e4919f"/><circle cx="139.6" cy="107.0" r="9.6" fill="#e4919f"/><circle cx="158.2" cy="103.5" r="8.7" fill="#e4919f"/><circle cx="179.0" cy="103.0" r="8.6" fill="#e4919f"/><circle cx="200.8" cy="104.3" r="10.1" fill="#e4919f"/><circle cx="7.3" cy="122.1" r="9.9" fill="#e4919f"/><circle cx="28.6" cy="123.9" r="9.2" fill="#e4919f"/><circle cx="52.0" cy="124.5" r="9.8" fill="#e4919f"/><circle cx="72.5" cy="125.0" r="8.6" fill="#e4919f"/><circle cx="92.8" cy="123.9" r="8.6" fill="#e4919f"/><circle cx="110.3" cy="125.4" r="9.6" fill="#e4919f"/><circle cx="129.3" cy="121.8" r="9.3" fill="#e4919f"/><circle cx="147.8" cy="121.3" r="9.8" fill="#e4919f"/><circle cx="171.6" cy="123.8" r="8.7" fill="#e4919f"/><circle cx="188.8" cy="126.4" r="8.9" fill="#e4919f"/><circle cx="-1.4" cy="143.2" r="8.6" fill="#e4919f"/><circle cx="22.4" cy="144.8" r="10.0" fill="#e4919f"/><circle cx="57.5" cy="139.3" r="8.9" fill="#e4919f"/><circle cx="79.3" cy="141.9" r="10.2" fill="#e4919f"/><circle cx="99.8" cy="143.8" r="9.4" fill="#e4919f"/><circle cx="122.8" cy="144.4" r="9.1" fill="#e4919f"/><circle cx="142.6" cy="140.4" r="8.8" fill="#e4919f"/><circle cx="161.0" cy="140.2" r="10.5" fill="#e4919f"/><circle cx="182.9" cy="142.0" r="9.9" fill="#e4919f"/><circle cx="201.9" cy="141.7" r="8.9" fill="#e4919f"/></g><g filter="url(#hb2)"><circle cx="68.2" cy="52.8" r="2.4" fill="#e8b4bf" stroke="#9a5a88" stroke-width="0.7"/><circle cx="189.2" cy="55.1" r="2.4" fill="#e8b4bf" stroke="#9a5a88" stroke-width="0.7"/><circle cx="207.9" cy="53.0" r="2.4" fill="#e8b4bf" stroke="#9a5a88" stroke-width="0.7"/><circle cx="0.4" cy="66.6" r="2.4" fill="#e8b4bf" stroke="#9a5a88" stroke-width="0.7"/><circle cx="39.0" cy="68.8" r="2.4" fill="#e8b4bf" stroke="#9a5a88" stroke-width="0.7"/><circle cx="29.2" cy="85.9" r="2.4" fill="#e8b4bf" stroke="#9a5a88" stroke-width="0.7"/><circle cx="70.8" cy="88.6" r="2.4" fill="#e8b4bf" stroke="#9a5a88" stroke-width="0.7"/><circle cx="22.3" cy="107.5" r="2.4" fill="#e8b4bf" stroke="#9a5a88" stroke-width="0.7"/><circle cx="42.2" cy="102.8" r="2.4" fill="#e8b4bf" stroke="#9a5a88" stroke-width="0.7"/><circle cx="62.8" cy="108.1" r="2.4" fill="#e8b4bf" stroke="#9a5a88" stroke-width="0.7"/><circle cx="83.4" cy="104.5" r="2.4" fill="#e8b4bf" stroke="#9a5a88" stroke-width="0.7"/><circle cx="122.0" cy="105.9" r="2.4" fill="#e8b4bf" stroke="#9a5a88" stroke-width="0.7"/><circle cx="137.7" cy="105.6" r="2.4" fill="#e8b4bf" stroke="#9a5a88" stroke-width="0.7"/><circle cx="7.7" cy="123.3" r="2.4" fill="#e8b4bf" stroke="#9a5a88" stroke-width="0.7"/><circle cx="72.7" cy="125.0" r="2.4" fill="#e8b4bf" stroke="#9a5a88" stroke-width="0.7"/><circle cx="91.2" cy="125.4" r="2.4" fill="#e8b4bf" stroke="#9a5a88" stroke-width="0.7"/><circle cx="111.8" cy="125.6" r="2.4" fill="#e8b4bf" stroke="#9a5a88" stroke-width="0.7"/><circle cx="130.9" cy="123.7" r="2.4" fill="#e8b4bf" stroke="#9a5a88" stroke-width="0.7"/><circle cx="148.6" cy="119.5" r="2.4" fill="#e8b4bf" stroke="#9a5a88" stroke-width="0.7"/><circle cx="189.2" cy="127.4" r="2.4" fill="#e8b4bf" stroke="#9a5a88" stroke-width="0.7"/><circle cx="59.4" cy="139.9" r="2.4" fill="#e8b4bf" stroke="#9a5a88" stroke-width="0.7"/><circle cx="77.4" cy="140.7" r="2.4" fill="#e8b4bf" stroke="#9a5a88" stroke-width="0.7"/><circle cx="99.3" cy="142.3" r="2.4" fill="#e8b4bf" stroke="#9a5a88" stroke-width="0.7"/><circle cx="124.2" cy="145.2" r="2.4" fill="#e8b4bf" stroke="#9a5a88" stroke-width="0.7"/><circle cx="141.0" cy="138.8" r="2.4" fill="#e8b4bf" stroke="#9a5a88" stroke-width="0.7"/><circle cx="159.2" cy="138.8" r="2.4" fill="#e8b4bf" stroke="#9a5a88" stroke-width="0.7"/><circle cx="203.2" cy="139.9" r="2.4" fill="#e8b4bf" stroke="#9a5a88" stroke-width="0.7"/><path d="M0 8.5 L198 23.7 L198 26.2 L0 11.0 Z" fill="#8a4888"/><ellipse cx="30.7" cy="13.4" rx="2.6" ry="0.9" fill="#5a2a70" transform="rotate(28 30.7 13.4)"/><ellipse cx="173.1" cy="32.3" rx="2.6" ry="0.9" fill="#5a2a70" transform="rotate(24 173.1 32.3)"/><ellipse cx="157.8" cy="26.6" rx="2.6" ry="0.9" fill="#5a2a70" transform="rotate(28 157.8 26.6)"/><ellipse cx="56.6" cy="18.2" rx="2.6" ry="0.9" fill="#5a2a70" transform="rotate(31 56.6 18.2)"/><ellipse cx="76.7" cy="18.4" rx="2.6" ry="0.9" fill="#5a2a70" transform="rotate(23 76.7 18.4)"/><ellipse cx="7.8" cy="14.9" rx="2.6" ry="0.9" fill="#5a2a70" transform="rotate(38 7.8 14.9)"/><ellipse cx="110.7" cy="21.7" rx="2.6" ry="0.9" fill="#5a2a70" transform="rotate(27 110.7 21.7)"/><ellipse cx="105.3" cy="20.1" rx="2.6" ry="0.9" fill="#5a2a70" transform="rotate(29 105.3 20.1)"/><ellipse cx="53.8" cy="15.7" rx="2.6" ry="0.9" fill="#5a2a70" transform="rotate(21 53.8 15.7)"/><ellipse cx="67.4" cy="22.9" rx="2.6" ry="0.9" fill="#5a2a70" transform="rotate(16 67.4 22.9)"/><ellipse cx="95.7" cy="23.7" rx="2.6" ry="0.9" fill="#5a2a70" transform="rotate(36 95.7 23.7)"/><ellipse cx="28.0" cy="20.5" rx="2.6" ry="0.9" fill="#5a2a70" transform="rotate(23 28.0 20.5)"/><ellipse cx="25.0" cy="19.1" rx="2.6" ry="0.9" fill="#5a2a70" transform="rotate(33 25.0 19.1)"/><ellipse cx="196.7" cy="28.2" rx="2.6" ry="0.9" fill="#5a2a70" transform="rotate(33 196.7 28.2)"/><ellipse cx="186.2" cy="30.1" rx="2.6" ry="0.9" fill="#5a2a70" transform="rotate(32 186.2 30.1)"/><ellipse cx="24.4" cy="15.3" rx="2.6" ry="0.9" fill="#5a2a70" transform="rotate(25 24.4 15.3)"/><ellipse cx="37.0" cy="14.5" rx="2.6" ry="0.9" fill="#5a2a70" transform="rotate(24 37.0 14.5)"/><ellipse cx="127.1" cy="25.3" rx="2.6" ry="0.9" fill="#5a2a70" transform="rotate(28 127.1 25.3)"/><ellipse cx="102.2" cy="25.9" rx="2.6" ry="0.9" fill="#5a2a70" transform="rotate(33 102.2 25.9)"/><ellipse cx="65.5" cy="16.6" rx="2.6" ry="0.9" fill="#5a2a70" transform="rotate(18 65.5 16.6)"/><ellipse cx="70.6" cy="20.1" rx="2.6" ry="0.9" fill="#5a2a70" transform="rotate(32 70.6 20.1)"/><ellipse cx="19.6" cy="14.1" rx="2.6" ry="0.9" fill="#5a2a70" transform="rotate(34 19.6 14.1)"/><ellipse cx="168.4" cy="26.1" rx="2.6" ry="0.9" fill="#5a2a70" transform="rotate(29 168.4 26.1)"/><ellipse cx="109.2" cy="21.5" rx="2.6" ry="0.9" fill="#5a2a70" transform="rotate(27 109.2 21.5)"/><ellipse cx="11.2" cy="20.7" rx="2.6" ry="0.9" fill="#5a2a70" transform="rotate(21 11.2 20.7)"/><ellipse cx="179.4" cy="33.2" rx="2.6" ry="0.9" fill="#5a2a70" transform="rotate(25 179.4 33.2)"/><ellipse cx="33.1" cy="15.9" rx="2.6" ry="0.9" fill="#5a2a70" transform="rotate(38 33.1 15.9)"/><ellipse cx="11.1" cy="14.0" rx="2.6" ry="0.9" fill="#5a2a70" transform="rotate(22 11.1 14.0)"/><ellipse cx="70.8" cy="25.8" rx="2.6" ry="0.9" fill="#5a2a70" transform="rotate(26 70.8 25.8)"/><ellipse cx="181.7" cy="31.0" rx="2.6" ry="0.9" fill="#5a2a70" transform="rotate(15 181.7 31.0)"/><ellipse cx="70.7" cy="19.3" rx="2.6" ry="0.9" fill="#5a2a70" transform="rotate(20 70.7 19.3)"/><ellipse cx="46.4" cy="16.3" rx="2.6" ry="0.9" fill="#5a2a70" transform="rotate(37 46.4 16.3)"/><ellipse cx="111.1" cy="23.5" rx="2.6" ry="0.9" fill="#5a2a70" transform="rotate(22 111.1 23.5)"/><ellipse cx="124.3" cy="23.6" rx="2.6" ry="0.9" fill="#5a2a70" transform="rotate(16 124.3 23.6)"/><ellipse cx="32.3" cy="21.1" rx="2.6" ry="0.9" fill="#5a2a70" transform="rotate(32 32.3 21.1)"/><ellipse cx="137.5" cy="25.4" rx="2.6" ry="0.9" fill="#5a2a70" transform="rotate(30 137.5 25.4)"/><ellipse cx="4.4" cy="17.2" rx="2.6" ry="0.9" fill="#5a2a70" transform="rotate(36 4.4 17.2)"/><ellipse cx="122.4" cy="25.2" rx="2.6" ry="0.9" fill="#5a2a70" transform="rotate(32 122.4 25.2)"/><ellipse cx="155.0" cy="26.5" rx="2.6" ry="0.9" fill="#5a2a70" transform="rotate(18 155.0 26.5)"/><ellipse cx="125.9" cy="26.7" rx="2.6" ry="0.9" fill="#5a2a70" transform="rotate(39 125.9 26.7)"/><ellipse cx="5.2" cy="16.7" rx="2.6" ry="0.9" fill="#5a2a70" transform="rotate(38 5.2 16.7)"/><ellipse cx="8.8" cy="18.0" rx="2.6" ry="0.9" fill="#5a2a70" transform="rotate(31 8.8 18.0)"/><ellipse cx="163.5" cy="28.5" rx="2.6" ry="0.9" fill="#5a2a70" transform="rotate(32 163.5 28.5)"/><ellipse cx="156.1" cy="24.7" rx="2.6" ry="0.9" fill="#5a2a70" transform="rotate(15 156.1 24.7)"/><ellipse cx="140.7" cy="23.0" rx="2.6" ry="0.9" fill="#5a2a70" transform="rotate(18 140.7 23.0)"/><ellipse cx="21.7" cy="21.1" rx="2.6" ry="0.9" fill="#5a2a70" transform="rotate(37 21.7 21.1)"/><ellipse cx="94.1" cy="25.0" rx="2.6" ry="0.9" fill="#5a2a70" transform="rotate(22 94.1 25.0)"/><ellipse cx="23.1" cy="18.4" rx="2.6" ry="0.9" fill="#5a2a70" transform="rotate(22 23.1 18.4)"/><ellipse cx="10.2" cy="18.5" rx="2.6" ry="0.9" fill="#5a2a70" transform="rotate(15 10.2 18.5)"/><ellipse cx="130.5" cy="22.4" rx="2.6" ry="0.9" fill="#5a2a70" transform="rotate(22 130.5 22.4)"/><ellipse cx="71.4" cy="23.4" rx="2.6" ry="0.9" fill="#5a2a70" transform="rotate(31 71.4 23.4)"/><ellipse cx="15.8" cy="14.9" rx="2.6" ry="0.9" fill="#5a2a70" transform="rotate(29 15.8 14.9)"/><ellipse cx="189.7" cy="29.5" rx="2.6" ry="0.9" fill="#5a2a70" transform="rotate(35 189.7 29.5)"/><ellipse cx="162.3" cy="30.6" rx="2.6" ry="0.9" fill="#5a2a70" transform="rotate(21 162.3 30.6)"/><ellipse cx="28.6" cy="20.6" rx="2.6" ry="0.9" fill="#5a2a70" transform="rotate(21 28.6 20.6)"/><ellipse cx="97.6" cy="22.2" rx="2.6" ry="0.9" fill="#5a2a70" transform="rotate(30 97.6 22.2)"/><ellipse cx="187.2" cy="27.1" rx="2.6" ry="0.9" fill="#5a2a70" transform="rotate(17 187.2 27.1)"/><ellipse cx="153.1" cy="24.6" rx="2.6" ry="0.9" fill="#5a2a70" transform="rotate(29 153.1 24.6)"/><ellipse cx="53.2" cy="23.2" rx="2.6" ry="0.9" fill="#5a2a70" transform="rotate(31 53.2 23.2)"/><ellipse cx="161.8" cy="26.5" rx="2.6" ry="0.9" fill="#5a2a70" transform="rotate(20 161.8 26.5)"/><ellipse cx="132.6" cy="22.6" rx="2.6" ry="0.9" fill="#5a2a70" transform="rotate(17 132.6 22.6)"/><ellipse cx="195.7" cy="34.0" rx="2.6" ry="0.9" fill="#5a2a70" transform="rotate(17 195.7 34.0)"/><ellipse cx="82.0" cy="17.6" rx="2.6" ry="0.9" fill="#5a2a70" transform="rotate(17 82.0 17.6)"/><ellipse cx="118.1" cy="27.5" rx="2.6" ry="0.9" fill="#5a2a70" transform="rotate(39 118.1 27.5)"/><ellipse cx="178.9" cy="28.2" rx="2.6" ry="0.9" fill="#5a2a70" transform="rotate(16 178.9 28.2)"/><ellipse cx="131.3" cy="25.5" rx="2.6" ry="0.9" fill="#5a2a70" transform="rotate(18 131.3 25.5)"/><ellipse cx="47.1" cy="15.8" rx="2.6" ry="0.9" fill="#5a2a70" transform="rotate(38 47.1 15.8)"/><ellipse cx="63.7" cy="25.2" rx="2.6" ry="0.9" fill="#5a2a70" transform="rotate(29 63.7 25.2)"/><ellipse cx="142.6" cy="29.2" rx="2.6" ry="0.9" fill="#5a2a70" transform="rotate(21 142.6 29.2)"/><ellipse cx="167.6" cy="32.7" rx="2.6" ry="0.9" fill="#5a2a70" transform="rotate(17 167.6 32.7)"/><ellipse cx="62.3" cy="17.9" rx="2.6" ry="0.9" fill="#5a2a70" transform="rotate(30 62.3 17.9)"/><ellipse cx="155.3" cy="31.2" rx="2.6" ry="0.9" fill="#5a2a70" transform="rotate(27 155.3 31.2)"/><ellipse cx="196.4" cy="32.1" rx="2.6" ry="0.9" fill="#5a2a70" transform="rotate(33 196.4 32.1)"/><ellipse cx="88.0" cy="23.5" rx="2.6" ry="0.9" fill="#5a2a70" transform="rotate(30 88.0 23.5)"/><ellipse cx="158.5" cy="27.8" rx="2.6" ry="0.9" fill="#5a2a70" transform="rotate(23 158.5 27.8)"/><ellipse cx="55.0" cy="18.3" rx="2.6" ry="0.9" fill="#5a2a70" transform="rotate(22 55.0 18.3)"/><ellipse cx="110.0" cy="28.8" rx="2.6" ry="0.9" fill="#5a2a70" transform="rotate(40 110.0 28.8)"/><ellipse cx="52.1" cy="18.6" rx="2.6" ry="0.9" fill="#5a2a70" transform="rotate(29 52.1 18.6)"/><ellipse cx="67.3" cy="16.4" rx="2.6" ry="0.9" fill="#5a2a70" transform="rotate(20 67.3 16.4)"/><ellipse cx="171.9" cy="28.3" rx="2.6" ry="0.9" fill="#5a2a70" transform="rotate(16 171.9 28.3)"/><ellipse cx="117.9" cy="22.0" rx="2.6" ry="0.9" fill="#5a2a70" transform="rotate(37 117.9 22.0)"/><ellipse cx="144.7" cy="21.9" rx="2.6" ry="0.9" fill="#5a2a70" transform="rotate(23 144.7 21.9)"/><ellipse cx="18.1" cy="14.8" rx="2.6" ry="0.9" fill="#5a2a70" transform="rotate(35 18.1 14.8)"/><ellipse cx="164.4" cy="32.0" rx="2.6" ry="0.9" fill="#5a2a70" transform="rotate(27 164.4 32.0)"/><ellipse cx="113.8" cy="25.0" rx="2.6" ry="0.9" fill="#5a2a70" transform="rotate(22 113.8 25.0)"/><ellipse cx="189.0" cy="26.8" rx="2.6" ry="0.9" fill="#5a2a70" transform="rotate(38 189.0 26.8)"/><ellipse cx="41.6" cy="21.5" rx="2.6" ry="0.9" fill="#5a2a70" transform="rotate(27 41.6 21.5)"/><ellipse cx="9.6" cy="19.1" rx="2.6" ry="0.9" fill="#5a2a70" transform="rotate(29 9.6 19.1)"/><ellipse cx="21.5" cy="22.1" rx="2.6" ry="0.9" fill="#5a2a70" transform="rotate(36 21.5 22.1)"/><ellipse cx="124.5" cy="21.0" rx="2.6" ry="0.9" fill="#5a2a70" transform="rotate(37 124.5 21.0)"/><ellipse cx="8.3" cy="20.7" rx="2.6" ry="0.9" fill="#5a2a70" transform="rotate(34 8.3 20.7)"/><ellipse cx="156.6" cy="31.7" rx="2.6" ry="0.9" fill="#5a2a70" transform="rotate(31 156.6 31.7)"/><ellipse cx="75.1" cy="20.6" rx="2.6" ry="0.9" fill="#5a2a70" transform="rotate(25 75.1 20.6)"/><ellipse cx="101.7" cy="25.2" rx="2.6" ry="0.9" fill="#5a2a70" transform="rotate(31 101.7 25.2)"/><ellipse cx="96.6" cy="25.5" rx="2.6" ry="0.9" fill="#5a2a70" transform="rotate(16 96.6 25.5)"/><ellipse cx="179.4" cy="26.8" rx="2.6" ry="0.9" fill="#5a2a70" transform="rotate(23 179.4 26.8)"/><ellipse cx="144.5" cy="26.6" rx="2.6" ry="0.9" fill="#5a2a70" transform="rotate(24 144.5 26.6)"/><ellipse cx="18.2" cy="19.0" rx="2.6" ry="0.9" fill="#5a2a70" transform="rotate(27 18.2 19.0)"/><ellipse cx="61.9" cy="19.3" rx="2.6" ry="0.9" fill="#5a2a70" transform="rotate(29 61.9 19.3)"/><ellipse cx="192.1" cy="31.6" rx="2.6" ry="0.9" fill="#5a2a70" transform="rotate(23 192.1 31.6)"/><ellipse cx="24.5" cy="15.2" rx="2.6" ry="0.9" fill="#5a2a70" transform="rotate(20 24.5 15.2)"/><ellipse cx="38.1" cy="20.9" rx="2.6" ry="0.9" fill="#5a2a70" transform="rotate(25 38.1 20.9)"/><ellipse cx="63.2" cy="17.0" rx="2.6" ry="0.9" fill="#5a2a70" transform="rotate(33 63.2 17.0)"/><ellipse cx="177.3" cy="31.1" rx="2.6" ry="0.9" fill="#5a2a70" transform="rotate(21 177.3 31.1)"/><ellipse cx="90.1" cy="18.6" rx="2.6" ry="0.9" fill="#5a2a70" transform="rotate(22 90.1 18.6)"/><ellipse cx="25.2" cy="17.4" rx="2.6" ry="0.9" fill="#5a2a70" transform="rotate(32 25.2 17.4)"/><ellipse cx="103.6" cy="26.0" rx="2.6" ry="0.9" fill="#5a2a70" transform="rotate(36 103.6 26.0)"/><ellipse cx="154.8" cy="26.7" rx="2.6" ry="0.9" fill="#5a2a70" transform="rotate(31 154.8 26.7)"/><ellipse cx="119.6" cy="26.7" rx="2.6" ry="0.9" fill="#5a2a70" transform="rotate(34 119.6 26.7)"/><ellipse cx="165.8" cy="27.9" rx="2.6" ry="0.9" fill="#5a2a70" transform="rotate(35 165.8 27.9)"/></g><g stroke="#777" stroke-width="0.5" fill="none" style="overflow:visible"><path d="M-6 48 L57 42 M-6 49 L17 62 M23 -4 L60 40 M48 -4 L66 54 M121 -3 L148 36 M183 -2 L165 22"/></g></svg>
<div class="a" style="left:0;top:0;font-family:'Liberation Sans';font-size:5.5px;color:#333;line-height:1"><div class="a" style="left:364.8px;top:268.2px;white-space:nowrap">Cytoplasm</div><div class="a" style="left:406px;top:268.2px;white-space:nowrap">Nucleus</div><div class="a" style="left:458px;top:262.5px;white-space:nowrap">Tunica</div><div class="a" style="left:452.5px;top:268.2px;white-space:nowrap">albuginea</div><div class="a" style="left:511px;top:263.5px;white-space:nowrap">Germinative</div><div class="a" style="left:513px;top:268.8px;white-space:nowrap">epithelium</div><div class="a" style="left:311px;top:323px;white-space:nowrap">Follicular</div><div class="a" style="left:318.5px;top:329px;white-space:nowrap">cells</div></div>
<svg class="a" style="left:0;top:0;overflow:visible" width="748" height="400">
<g stroke="#1818d8" stroke-width="0.7" fill="none" stroke-linecap="round" stroke-linejoin="round">
<path d="M482.5 273.5 C502 292 517 306 532 311 C542 315 550 318 558 318" stroke-width="0.9"/>
<path d="M543 272 L550 276 L548 279"/>
<path d="M549.0 282.0 C549.6 279.0 551.0 279.0 551.2 281.1 S552.5 282.2 553.3 281.5 C554.0 277.8 555.3 277.8 555.5 280.6 S556.8 281.9 557.7 281.2 C558.3 277.5 559.6 277.5 559.8 280.3 S561.1 281.6 562.0 280.9 C562.6 278.2 563.9 278.2 564.2 280.3 S565.5 281.4 566.3 280.7  M571.3 280.6 C572.0 277.6 573.3 277.6 573.5 279.7 S574.8 280.8 575.7 280.1 C576.3 276.4 577.6 276.4 577.8 279.1 S579.1 280.5 580.0 279.8 C580.6 274.3 581.9 274.3 582.2 278.3 S583.5 280.2 584.3 279.5 C585.0 275.8 586.3 275.8 586.5 278.6 S587.8 279.9 588.7 279.2 C589.3 277.0 590.6 277.0 590.8 278.7 S592.1 279.6 593.0 278.9  M598.0 278.8 C598.6 274.9 599.9 274.9 600.2 277.7 S601.5 279.0 602.3 278.3 C603.0 276.2 604.3 276.2 604.5 277.8 S605.8 278.8 606.7 278.1 C607.3 272.6 608.6 272.6 608.8 276.6 S610.1 278.5 611.0 277.8 C611.6 275.0 612.9 275.0 613.2 277.1 S614.5 278.2 615.3 277.5 C616.0 273.8 617.3 273.8 617.5 276.6 S618.8 277.9 619.7 277.2 C620.3 274.4 621.6 274.4 621.8 276.5 S623.1 277.6 624.0 276.9  M629.0 276.8 C629.6 273.8 630.9 273.8 631.2 275.9 S632.5 277.0 633.3 276.3 C634.0 270.9 635.3 270.9 635.5 274.8 S636.8 276.8 637.7 276.1 C638.3 272.4 639.6 272.4 639.8 275.1 S641.1 276.5 642.0 275.8 "/>
<path d="M546.0 288.0 C546.6 284.1 547.7 284.1 547.9 286.8 S549.0 288.2 549.8 287.5 C550.3 282.1 551.5 282.1 551.7 286.1 S552.8 288.0 553.6 287.3 C554.1 281.9 555.3 281.9 555.4 285.9 S556.6 287.8 557.3 287.1  M562.3 287.1 C562.9 284.1 564.0 284.1 564.2 286.2 S565.4 287.3 566.1 286.6 C566.7 283.9 567.8 283.9 568.0 286.0 S569.1 287.1 569.9 286.4 C570.5 283.6 571.6 283.6 571.8 285.7 S572.9 286.8 573.7 286.1  M578.7 286.1 C579.2 282.2 580.4 282.2 580.6 285.0 S581.7 286.3 582.4 285.6 C583.0 280.2 584.1 280.2 584.3 284.2 S585.5 286.1 586.2 285.4 C586.8 283.3 587.9 283.3 588.1 285.0 S589.2 285.9 590.0 285.2  M595.0 285.2 C595.6 282.8 596.7 282.8 596.9 284.5 S598.0 285.4 598.8 284.7 C599.3 282.0 600.5 282.0 600.7 284.1 S601.8 285.2 602.6 284.5 C603.1 280.9 604.3 280.9 604.4 283.6 S605.6 285.0 606.3 284.3 C606.9 282.2 608.0 282.2 608.2 283.9 S609.4 284.8 610.1 284.1  M615.1 284.1 C615.7 281.1 616.8 281.1 617.0 283.2 S618.1 284.3 618.9 283.6 C619.5 281.5 620.6 281.5 620.8 283.1 S621.9 284.1 622.7 283.4 C623.2 280.6 624.4 280.6 624.6 282.7 S625.7 283.8 626.4 283.1 C627.0 277.7 628.1 277.7 628.3 281.7 S629.5 283.6 630.2 282.9 C630.8 279.3 631.9 279.3 632.1 282.0 S633.2 283.4 634.0 282.7 "/>
<path d="M562.0 295.0 C562.5 289.3 563.5 289.3 563.7 293.3 S564.7 295.2 565.3 294.5 C565.8 289.1 566.8 289.1 567.0 293.1 S568.0 295.0 568.7 294.3 C569.2 288.9 570.2 288.9 570.3 292.8 S571.3 294.8 572.0 294.1  M577.0 294.0 C577.5 290.1 578.5 290.1 578.7 292.8 S579.7 294.2 580.3 293.5  M585.3 293.4 C585.8 287.7 586.8 287.7 587.0 291.7 S588.0 293.6 588.7 292.9 C589.2 290.2 590.2 290.2 590.3 292.3 S591.3 293.4 592.0 292.7 C592.5 290.0 593.5 290.0 593.7 292.1 S594.7 293.2 595.3 292.5  M600.3 292.4 C600.8 290.0 601.8 290.0 602.0 291.7 S603.0 292.6 603.7 291.9  M608.7 291.9 C609.2 289.5 610.2 289.5 610.3 291.2 S611.3 292.1 612.0 291.4 C612.5 288.7 613.5 288.7 613.7 290.8 S614.7 291.9 615.3 291.2 C615.8 285.7 616.8 285.7 617.0 289.7 S618.0 291.6 618.7 290.9 C619.2 288.2 620.2 288.2 620.3 290.3 S621.3 291.4 622.0 290.7 "/>
<path d="M559.0 321.0 C559.8 316.8 561.4 316.8 561.7 319.7 S563.3 321.2 564.4 320.5 C565.2 312.9 566.8 312.9 567.0 318.5 S568.7 321.1 569.7 320.4 C570.5 316.6 572.1 316.6 572.4 319.6 S574.0 321.0 575.1 320.3 C575.9 312.8 577.5 312.8 577.8 318.4 S579.4 321.0 580.5 320.3  M585.5 320.6 C586.3 315.2 587.9 315.2 588.1 319.0 S589.7 320.8 590.8 320.1 C591.6 312.6 593.2 312.6 593.5 318.1 S595.1 320.7 596.2 320.0  M601.2 320.4 C602.0 314.9 603.6 314.9 603.9 318.8 S605.5 320.6 606.5 319.9 C607.3 316.1 609.0 316.1 609.2 319.1 S610.8 320.5 611.9 319.8 C612.7 314.8 614.3 314.8 614.6 318.6 S616.2 320.4 617.3 319.7 C618.1 314.7 619.7 314.7 620.0 318.5 S621.6 320.4 622.6 319.7 C623.4 312.1 625.0 312.1 625.3 317.7 S626.9 320.3 628.0 319.6 "/>
<path d="M558 312 V322"/>
</g>
<path d="M646 279 C638 281 638 295 646 297" stroke="#000" stroke-width="3.8" fill="none"/>
</svg>
  <div class="a" style="left:180px;top:512px;width:369px;height:1px;background:#b4c8e8"></div>
  <div class="a" style="left:180px;top:555px;width:369px;height:1px;background:#b4c8e8"></div>
<div class="t" style="left:262.4px;top:525.7px;font-size:18.5px;color:#8eb0e0;font-family:'Liberation Serif';font-style:italic">Female reproductive system</div>
<div class="t" style="left:138.0px;top:576.8px;font-size:10.2px;color:#111;">Ovarian follicels:</div>
<div class="t" style="left:138.0px;top:599.3px;font-size:10.2px;color:#111;">Found in cortex of ovary. Between stromal cells, there are located oocytes that surrounded by one</div>
<div class="t" style="left:138.0px;top:614.2px;font-size:10.2px;color:#111;">or more layers of follicular cells.</div>
<div class="t" style="left:138.0px;top:628.5px;font-size:10.2px;color:#111;">2 ovaries of yound adult female contains 400,000 follicles (most will dgenerate by atresia.</div>
<div class="t" style="left:138.0px;top:651.6px;font-size:10.2px;color:#111;">450 follicles will cycle to ovulation during lifetime.</div>
  <div class="a" style="left:138px;top:672px;width:1px;height:12px;background:#e0e0e0"></div>
  <!-- ribbon shadow -->
  <div class="a" style="left:1px;top:170px;width:746px;height:4px;background:linear-gradient(rgba(0,0,0,0.12),rgba(0,0,0,0))"></div>
  <!-- status bar -->
  <div class="a" style="left:1px;top:708px;width:746px;height:24px;background:#f3f2f1;border-top:1px solid #e1dfdd"></div>
  <div class="a" style="left:0;top:732px;width:748px;height:1px;background:#2b579a"></div>
<div class="t" style="left:6.9px;top:714.5px;font-size:11px;color:#555;">Page 2 of 2</div>
<div class="t" style="left:77.0px;top:714.5px;font-size:11px;color:#555;">242 words</div>
<div class="t" style="left:172.9px;top:714.5px;font-size:11px;color:#555;">English (United States)</div>
  <svg class="a" style="left:0;top:700px" width="748" height="33">
    <g stroke="#666" stroke-width="0.9" fill="none">
      <path d="M144.5 14 H151.5 V25.5 H144.5 Z M151.5 14 H157 M151.5 25.5 H158 V22.5 M151.5 14 V27"/><path d="M155 16.5 L159.5 21 M159.5 16.5 L155 21" stroke-width="1.1"/>
      <path d="M469.5 13.5 H475.5 L476.5 14.5 L477.5 13.5 H483.5 V25 H477.5 L476.5 26 L475.5 25 H469.5 Z M476.5 14.5 V25.5 M471 16.5 H474.5 M471 19 H474.5 M471 21.5 H474.5 M478.5 16.5 H482 M478.5 19 H482 M478.5 21.5 H482"/>
    </g>
    <rect x="492" y="8" width="31.5" height="24" fill="#c8c6c4"/>
    <g stroke="#555" stroke-width="0.9" fill="none">
      <rect x="501.5" y="13.5" width="13" height="12"/><path d="M503.5 16.5 H512.5 M503.5 19 H512.5 M503.5 21.5 H512.5"/>
      <path d="M534 13.5 H546 V20 M534 13.5 V25.5 H540 M536 16.5 H544 M536 19 H542 M536 21.5 H539"/>
      <circle cx="544.5" cy="23.5" r="3.5" fill="#555"/>
    </g>
    <path d="M560.5 19.7 H568.7 M683 19.7 H691.7 M687.3 15.5 V24" stroke="#444" stroke-width="1.6"/>
    <path d="M572.8 19.7 H678.6" stroke="#b0b0b0" stroke-width="1"/>
    <rect x="607" y="13.7" width="6" height="12.8" fill="#666"/>
    <path d="M626 16.5 V23" stroke="#999" stroke-width="0.8"/>
  </svg>
<div class="t" style="left:701.2px;top:714.5px;font-size:11px;color:#555;">70%</div>
  <div class="a" style="left:1px;top:37px;width:746px;height:1px;background:#c9d3e3"></div>
<svg class="a" style="left:0;top:37px" width="748" height="140">
<g transform="translate(0,-37)">
  <!-- tab seps -->
  <g fill="#d6d4d2">
    <rect x="107.5" y="42.5" width="1" height="22"/><rect x="154.5" y="42.5" width="1" height="22"/><rect x="195.5" y="42.5" width="1" height="22"/>
    <rect x="249.5" y="42.5" width="1" height="22"/><rect x="301.5" y="42.5" width="1" height="22"/><rect x="380.5" y="42.5" width="1" height="22"/>
    <rect x="443" y="42.5" width="1" height="22"/><rect x="496" y="42.5" width="1" height="22"/><rect x="535" y="42.5" width="1" height="22"/><rect x="574" y="42.5" width="1" height="22"/>
  </g>
  <rect x="63.3" y="64.3" width="40.5" height="3" fill="#2b579a"/>
  <!-- tell me search -->
  <circle cx="594" cy="52.5" r="4.8" stroke="#444" stroke-width="1.1" fill="none"/>
  <path d="M590.6 56 L585 61.5" stroke="#444" stroke-width="1.2"/>
  <rect x="680.5" y="41.5" width="21.5" height="23.5" fill="#fff" stroke="#e1dfdd"/>
  <rect x="711.5" y="41.5" width="22" height="23.5" fill="#fff" stroke="#e1dfdd"/>
  <path d="M686 52 V59 H697 V55 M689 56 C690 51 693 49 697 49 M694 46 L697.5 49 L694 52" stroke="#2b579a" stroke-width="1.1" fill="none"/>
  <path d="M716.5 47 H728.5 V55.5 H721 L718 58.5 V55.5 H716.5 Z" stroke="#2b579a" stroke-width="1.1" fill="none"/>
  <!-- group seps -->
  <g fill="#d1cfcd">
    <rect x="87" y="73" width="1" height="94"/><rect x="304" y="73" width="1" height="94"/><rect x="514" y="73" width="1" height="94"/>
    <rect x="577" y="73" width="1" height="94"/><rect x="635" y="73" width="1" height="94"/><rect x="699.5" y="73" width="1" height="94"/>
  </g>
  <!-- launchers -->
  <g stroke="#777" stroke-width="0.9" fill="none">
    <path d="M76.5 164.5 V159.5 H81.5 M78 161 L81.5 164.5 M79.5 164.5 H81.5 V162.5"/>
    <path d="M293.5 164.5 V159.5 H298.5 M295 161 L298.5 164.5 M296.5 164.5 H298.5 V162.5"/>
    <path d="M504 164.5 V159.5 H509 M505.5 161 L509 164.5 M507 164.5 H509 V162.5"/>
    <path d="M566.5 164.5 V159.5 H571.5 M568 161 L571.5 164.5 M569.5 164.5 H571.5 V162.5"/>
    <path d="M729.5 164 L734.5 159.5 L739.5 164" stroke="#555" stroke-width="1.2"/>
  </g>
  <!-- clipboard -->
  <rect x="20.5" y="81" width="22" height="25.5" fill="#fbe3c2" stroke="#f0a030" stroke-width="1.6"/>
  <rect x="22.5" y="83" width="18" height="21.5" fill="#fafafa"/>
  <path d="M25 85.5 V80.5 H28.5 C28.5 77 34.5 77 34.5 80.5 H38 V85.5 Z" fill="#fafafa" stroke="#666" stroke-width="0.9"/>
  <rect x="34.5" y="90.5" width="14.5" height="18" fill="#fafafa" stroke="#444" stroke-width="1.1"/>
  <path d="M30 135.5 h5 l-2.5 2.5z M172.5 84.5 h5 l-2.5 2.5z" fill="#555"/>
  <g stroke="#a8a8a8" stroke-width="0.9" fill="none">
    <path d="M63 78 L70 92 M71 78 L64 92"/><circle cx="63.5" cy="93" r="1.8"/><circle cx="70.5" cy="93" r="1.8"/>
    <path d="M62 115.5 H58.5 V103.5 H65.5 V106 M61 106.5 H70 L73.5 110 V119 H61 Z M63.5 112 H71 M63.5 114.5 H71 M63.5 117 H71"/>
  </g>
  <path d="M59 137 L66 131.5 L72 136 L68 142.5 Z" fill="#f7a14a"/>
  <path d="M61 137 L66 133.5 L70 136.5 L66 138 Z" fill="#fff"/>
  <path d="M66 131.5 L72 136 M68 134 L74 128.5 L76 130 L71 136" stroke="#444" stroke-width="1.1" fill="none"/>
  <!-- font box -->
  <rect x="96.5" y="75.5" width="200" height="23" fill="#fff" stroke="#d2d0ce"/>
  <rect x="250" y="76" width="1" height="22" fill="#d2d0ce"/>
  <path d="M241.5 85.5 h5 l-2.5 2.5z M287.5 85.5 h5 l-2.5 2.5z" fill="#555"/>
  <!-- font row2 -->
  <g fill="#555">
    <path d="M173.5 109.5 h5 l-2.5 2.5z M120.5 134 h5 l-2.5 2.5z M159.5 134 h5 l-2.5 2.5z M197.5 134 h5 l-2.5 2.5z M230.5 134 h5 l-2.5 2.5z"/>
  </g>
  <rect x="259.5" y="101" width="1" height="21" fill="#d1cfcd"/>
  <rect x="244.5" y="125" width="1" height="21" fill="#d1cfcd"/>
</g>
</svg>
<svg class="a" style="left:300px;top:70px" width="448" height="100">
<g transform="translate(-300,-70)">
  <!-- row1 -->
  <g fill="#2b88d8">
    <rect x="317" y="78.5" width="2.5" height="2.5"/><rect x="317" y="84.5" width="2.5" height="2.5"/><rect x="317" y="90.5" width="2.5" height="2.5"/>
  </g>
  <g stroke="#555" stroke-width="1.1">
    <path d="M322 79.7 H333.5 M322 85.7 H333.5 M322 91.7 H333.5"/>
    <path d="M359 79.7 H371 M359 85.7 H371 M359 91.7 H371"/>
    <path d="M395.5 79.7 H409 M400.5 85.7 H406 M400.5 91.7 H404.5"/>
    <path d="M434.5 78.7 H450.5 M441.5 83 H450.5 M441.5 88 H450.5 M434.5 92.7 H450.5"/>
    <path d="M459.5 78.7 H475.5 M466.5 83 H475.5 M466.5 88 H475.5 M459.5 92.7 H475.5"/>
  </g>
  <g fill="#2b88d8" font-family="Liberation Sans" font-size="5.5">
    <text x="354" y="81">1</text><text x="354" y="87">2</text><text x="354" y="93">3</text>
    <text x="392" y="81">1</text><text x="396" y="87">a</text><text x="398" y="93">i</text>
  </g>
  <path d="M441 85.5 H435 M437.5 83 L435 85.5 L437.5 88 M459.5 85.5 H465.5 M463 83 L465.5 85.5 L463 88" stroke="#2b88d8" stroke-width="1.1" fill="none"/>
  <g fill="#555"><path d="M342.5 84.5 h5 l-2.5 2.5z M380.5 84.5 h5 l-2.5 2.5z M414 84.5 h5 l-2.5 2.5z M442 111 h5 l-2.5 2.5z M398 135.5 h5 l-2.5 2.5z M436 135.5 h5 l-2.5 2.5z"/></g>
  <g fill="#d1cfcd"><rect x="427" y="76" width="1" height="21"/><rect x="414.5" y="101" width="1" height="21"/><rect x="365.5" y="125" width="1" height="21"/><rect x="448" y="125" width="1" height="21"/><rect x="478.5" y="125" width="1" height="21"/></g>
  <!-- row2 -->
  <rect x="314" y="101" width="24" height="22" fill="#c8c6c4"/>
  <rect x="314" y="125" width="24" height="22" fill="#c8c6c4"/>
  <g stroke="#444" stroke-width="1.1">
    <path d="M318 104.5 H334 M318 109 H328 M318 113.5 H334 M318 118 H328"/>
    <path d="M342.8 104.5 H358 M345.5 109 H355.5 M342.8 113.5 H358 M345.5 118 H355.5"/>
    <path d="M366.7 104.5 H382 M372 109 H382 M366.7 113.5 H382 M372 118 H382"/>
    <path d="M390.7 104.5 H407 M390.7 109 H407 M390.7 113.5 H407 M390.7 118 H407"/>
    <path d="M427.5 104.5 H438.5 M427.5 109 H438.5 M427.5 113.5 H438.5 M427.5 118 H438.5"/>
  </g>
  <path d="M423.5 104 V118 M421 106.5 L423.5 104 L426 106.5 M421 115.5 L423.5 118 L426 115.5" stroke="#2b88d8" stroke-width="1.3" fill="none"/>
  <!-- row3 -->
  <path d="M317.5 133 L320 135.5 L317.5 138" stroke="#2b88d8" stroke-width="1.1" fill="none"/>
  <path d="M356.5 133 L354 135.5 L356.5 138" stroke="#2b88d8" stroke-width="1.1" fill="none"/>
  <path d="M375 136 L380 129 L385 133 L380.5 139 Z" stroke="#444" stroke-width="1.1" fill="none"/>
  <path d="M384 130 C386 130 387 132 387 135" stroke="#2b88d8" stroke-width="1.2" fill="none"/>
  <rect x="372.5" y="140.5" width="17" height="3.5" fill="#fff" stroke="#aaa" stroke-width="0.8"/>
  <g stroke="#bbb" stroke-width="0.8" stroke-dasharray="1.5 1" fill="none"><rect x="410.5" y="127.5" width="16" height="14"/><path d="M418.5 127.5 V141.5 M410.5 134.5 H426.5"/></g>
  <path d="M410.5 142.5 H427" stroke="#444" stroke-width="1.2"/>
  <path d="M465 128 V143 M462 140 L465 143 L468 140" stroke="#444" stroke-width="1.2" fill="none"/>
  <g font-family="Liberation Sans" font-size="8">
    <text x="454.5" y="134.5" fill="#2b88d8">A</text><text x="455" y="143.5" fill="#444">Z</text>
  </g>
</g>
</svg>
<div class="t" style="left:320px;top:127px;font-size:12px;font-weight:bold;color:#444">&#182;</div>
<div class="t" style="left:343.5px;top:127px;font-size:12px;font-weight:bold;color:#444">&#182;</div>
<div class="t" style="left:489px;top:126.5px;font-size:14px;font-weight:bold;color:#444">&#182;</div>
<svg class="a" style="left:520px;top:70px" width="228" height="70">
<g transform="translate(-520,-70)">
  <path d="M532 108.5 L543 79 L554 108.5 M536 98 H550" stroke="#333" stroke-width="1.5" fill="none"/>
  <path d="M549 102 L561 88 C563 85.5 565.5 87.5 564 89.5 L553 104" stroke="#444" stroke-width="1" fill="#fff"/>
  <path d="M547.5 101 C551.5 100 554 103 552.5 106 C550.5 108.5 545 108.5 541 107 C544 106 545.5 103 547.5 101 Z" fill="#2b88d8"/>
  <rect x="589.5" y="72.5" width="33" height="33" fill="#fdfdfd" stroke="#e1dfdd"/>
  <circle cx="608.5" cy="86" r="4.8" stroke="#444" stroke-width="1.1" fill="none"/>
  <path d="M605 89.5 L599.5 95" stroke="#444" stroke-width="1.2"/>
  <rect x="660.5" y="77.5" width="13" height="23" rx="3" fill="#78b4e8" stroke="#2b88d8" stroke-width="1"/>
  <path d="M657.5 92 V96 C657.5 104.5 676.5 104.5 676.5 96 V92 M667 102 V106.5 M662 106.5 H672" stroke="#444" stroke-width="1.1" fill="none"/>
  <g fill="#555"><path d="M544.3 134.5 h5 l-2.5 2.5z M604.4 133 h5 l-2.5 2.5z M665.2 135.5 h5 l-2.5 2.5z"/></g>
</g>
</svg>
<div class="t" style="left:18.7px;top:47.8px;font-size:13.5px;color:#444;">File</div>
<div class="t" style="left:64.2px;top:47.8px;font-size:13.3px;color:#333;font-weight:bold;letter-spacing:0.7px">Home</div>
<div class="t" style="left:114.4px;top:47.8px;font-size:13.5px;color:#444;">Insert</div>
<div class="t" style="left:159.3px;top:47.8px;font-size:13.5px;color:#444;">Draw</div>
<div class="t" style="left:201.6px;top:47.8px;font-size:13.5px;color:#444;">Design</div>
<div class="t" style="left:255.4px;top:47.8px;font-size:13.5px;color:#444;">Layout</div>
<div class="t" style="left:308.4px;top:47.8px;font-size:13.5px;color:#444;">References</div>
<div class="t" style="left:386.0px;top:47.8px;font-size:13.5px;color:#444;">Mailings</div>
<div class="t" style="left:448.0px;top:47.8px;font-size:13.5px;color:#444;">Review</div>
<div class="t" style="left:501.0px;top:47.8px;font-size:13.5px;color:#444;">View</div>
<div class="t" style="left:540.5px;top:47.8px;font-size:13.5px;color:#444;">Help</div>
<div class="t" style="left:609.0px;top:47.8px;font-size:13.5px;color:#444;">Tell me</div>
<div class="t" style="left:17.6px;top:115.3px;font-size:11.5px;color:#444;">Paste</div>
<div class="t" style="left:10.8px;top:156.8px;font-size:10.5px;color:#444;">Clipboard</div>
<div class="t" style="left:100.6px;top:81.1px;font-size:12.3px;color:#444;">Calibri (Body)</div>
<div class="t" style="left:254.9px;top:81.1px;font-size:12.3px;color:#444;">11</div>
<div class="t" style="left:176.5px;top:156.8px;font-size:10.5px;color:#444;">Font</div>
<div class="t" style="left:375.9px;top:156.8px;font-size:10.5px;color:#444;">Paragraph</div>
<div class="t" style="left:530.5px;top:114.1px;font-size:11.5px;color:#444;">Styles</div>
<div class="t" style="left:523.7px;top:156.8px;font-size:10.5px;color:#444;">Styles</div>
<div class="t" style="left:587.5px;top:111.5px;font-size:11.5px;color:#444;">Editing</div>
<div class="t" style="left:648.4px;top:114.9px;font-size:12px;color:#444;">Dictate</div>
<div class="t" style="left:654.0px;top:156.8px;font-size:10.5px;color:#444;">Voice</div>
<div class="t" style="left:104px;top:103px;font-size:14px;font-weight:bold;color:#333">B</div>
<div class="t" style="left:129px;top:103px;font-size:14px;font-style:italic;font-family:'Liberation Serif';color:#444">I</div>
<div class="t" style="left:151px;top:103px;font-size:13px;color:#444;text-decoration:underline">U</div>
<div class="t" style="left:187px;top:104px;font-size:12.5px;color:#555;text-decoration:line-through">ab</div>
<div class="t" style="left:216px;top:104px;font-size:13px;color:#444">x<sub style="font-size:8px;color:#2b88d8">2</sub></div>
<div class="t" style="left:240px;top:104px;font-size:13px;color:#444">x<sup style="font-size:8px;color:#2b88d8">2</sup></div>
<div class="t" style="left:266px;top:102px;font-size:16px;color:#444">A</div>
<div class="a" style="left:275px;top:113px;width:7px;height:5px;border:1.3px solid #b146c2;transform:rotate(-35deg)"></div>
<div class="t" style="left:100px;top:126px;font-size:17px;font-weight:bold;color:#2b88d8;-webkit-text-stroke:0.5px #9bcbf0">A</div>
<div class="a" style="left:134.5px;top:140.3px;width:17.5px;height:3.6px;background:#ffef00"></div>
<div class="a" style="left:172.5px;top:140.3px;width:17.5px;height:3.6px;background:#e81123"></div>
<div class="t" style="left:173.5px;top:126px;font-size:15px;color:#444">A</div>
<div class="t" style="left:211px;top:128px;font-size:13px;color:#555">Aa</div>
<div class="t" style="left:254.5px;top:128px;font-size:12px;color:#555">A<span style="color:#2b88d8;font-size:8px;vertical-align:4px">^</span></div>
<div class="t" style="left:278.5px;top:130px;font-size:10px;color:#555">A<span style="color:#2b88d8;font-size:8px;vertical-align:4px">&#711;</span></div>
<svg class="a" style="left:130px;top:124px" width="24" height="20"><path d="M5 14 L8 9 L17 1.5 L20.5 4.5 L12 13 Z M8 9 L12 13" stroke="#555" stroke-width="1.1" fill="none"/><path d="M5 14 L9.5 14 L8 12 Z" fill="#555"/></svg>
</div>
<!-- TASKBAR -->
<div id="tb" class="a">
  <div class="a" style="left:0;top:0;width:52px;height:43px;background:#1f2a1f"></div>
  <div class="a" style="left:52px;top:0;width:369px;height:43px;background:#f1f1f1"></div>
  <svg class="a" style="left:0;top:0" width="1376" height="43">
    <g transform="translate(0,-733)">
    <path d="M17 748.2 L24.5 747.1 V754.3 H17 Z M25.7 746.9 L34.4 745.7 V754.3 H25.7 Z M17 755.5 H24.5 V762.7 L17 761.6 Z M25.7 755.5 H34.4 V763.6 L25.7 762.9 Z" fill="#fff"/>
    <circle cx="75.8" cy="751.5" r="5.4" stroke="#222" stroke-width="1.3" fill="none"/>
    <path d="M71.8 755.5 L64.5 762.7" stroke="#222" stroke-width="1.4"/>
    <!-- task view -->
    <g stroke="#eee" stroke-width="1.1" fill="none">
      <path d="M440 746.5 H452 M440 761.5 H452 M441.5 749.5 H450.5 V758.5 H441.5 Z M455.5 746.5 V748 M455.5 751 V762"/>
    </g>
    <!-- explorer -->
    <path d="M490.5 746 H499 L501 748.5 H514.5 V764 H490.5 Z" fill="#f4c33b"/>
    <path d="M490.5 750.5 H514.5 V764 H490.5 Z" fill="#ffd860"/>
    <path d="M496 756 H509 V764.5 H505.5 V759.5 H499.5 V764.5 H496 Z" fill="#2c8ee8"/>
    <!-- globe -->
    <defs><radialGradient id="gg" cx="0.5" cy="0.35" r="0.6"><stop offset="0" stop-color="#60b8ff"/><stop offset="0.55" stop-color="#1a70c8"/><stop offset="1" stop-color="#062040"/></radialGradient></defs>
    <circle cx="556" cy="754.5" r="12.5" fill="url(#gg)"/>
    <path d="M545 760 C549 765 563 765 567 760" stroke="#20c8c0" stroke-width="2.5" fill="none"/>
    <g fill="#020a14"><circle cx="549" cy="755.5" r="1.9"/><circle cx="556" cy="754.5" r="1.9"/><circle cx="563" cy="755.5" r="1.9"/><path d="M546.5 767 L549 757.5 L551.5 767 Z M553.5 767 L556 756.5 L558.5 767 Z M560.5 767 L563 757.5 L565.5 767 Z M545 757 L553 760 M567 757 L559 760" stroke="#020a14" stroke-width="1"/></g>
    <!-- xodo -->
    <rect x="597" y="741" width="26" height="26" fill="#fff"/>
    <g fill="none" stroke-width="1.7" stroke-linejoin="round">
      <path d="M599.5 745.5 C603 745 607 747 609.5 751 C607 753 603 754 599.5 753.5 Z" stroke="#1ea0e6"/>
      <path d="M600.5 755 C603.5 754.5 607 755.5 609.5 756.5 C607 760 604 762 600.5 763 Z" stroke="#1a70b8"/>
      <path d="M618.5 746 C615 746.5 612 748.5 609.5 751 C612 752.5 615 753 618.5 753 Z" stroke="#f06a2a"/>
      <path d="M620 755 C616 755 612.5 755.5 609.5 756.5 C612 760 616 762.5 620 762.5 Z" stroke="#f59a2a"/>
    </g>
    <!-- chrome -->
    <circle cx="663.6" cy="754.3" r="12.2" fill="#db4437"/>
    <path d="M663.6 754.3 L674.17 748.2 A12.2 12.2 0 0 1 668.76 765.36 Z" fill="#ffcd40" stroke="#ffcd40" stroke-width="0.3"/>
    <path d="M663.6 754.3 L668.76 765.36 A12.2 12.2 0 0 1 653.03 748.2 Z" fill="#0f9d58" stroke="#0f9d58" stroke-width="0.3"/>
    <circle cx="663.6" cy="754.3" r="5.6" fill="#fff"/>
    <circle cx="663.6" cy="754.3" r="4.5" fill="#4285f4"/>
    <!-- acrobat -->
    <defs><linearGradient id="ag" x1="0" y1="0" x2="0" y2="1"><stop offset="0" stop-color="#ee1111"/><stop offset="1" stop-color="#a80808"/></linearGradient></defs>
    <rect x="705.4" y="742" width="24" height="23" fill="url(#ag)"/>
    <path d="M710 760.5 C712 758 714.5 754 716.5 749.5 C717.5 747 717 745.5 716.5 745.5 C715.5 745.5 715.5 748 717 752 C718.5 755 721 757.5 725 756.5 C726 756 725.5 755 724 755 C720 755 714 757.5 710.5 760.5 C709.5 761.5 710.5 762 711.5 761 Z" stroke="#fff" stroke-width="0.9" fill="none"/>
    <!-- word active -->
    <rect x="745" y="733" width="53" height="43" fill="#5e5c4d"/>
    <rect x="766" y="745.5" width="16" height="18" fill="#fff" stroke="#2b579a" stroke-width="1"/>
    <path d="M769 749 H780 M769 752 H780 M769 755 H780 M769 758 H780 M769 761 H780" stroke="#2b579a" stroke-width="1"/>
    <path d="M759.5 745.5 L772 743 V767 L759.5 764.5 Z" fill="#2b579a"/><text x="761" y="759" font-family="Liberation Sans" font-weight="bold" font-size="9.5" fill="#fff">W</text>
    <!-- underlines -->
    <g fill="#76b9ed"><rect x="481" y="774" width="44" height="2"/><rect x="588" y="774" width="44" height="2"/><rect x="641.5" y="774" width="44.5" height="2"/><rect x="695.5" y="774" width="44.5" height="2"/><rect x="745" y="774" width="53" height="2"/></g>
    <!-- tray -->
    <g stroke="#eee" stroke-width="1.1" fill="none">
      <path d="M1035.5 758 L1042.3 751 L1049 758"/>
      <path d="M1071 761 C1072 753 1077 748 1084.5 748 M1074.5 761 C1075 756 1079 752 1084.5 752 M1078 761 C1078 758.5 1081 756 1084.5 756" stroke-dasharray="none"/>
      <path d="M1104.5 750.5 V749 H1108 V750.5 M1103.5 750.5 H1119 V760 H1103.5 Z M1101.5 753 H1103.5 M1101.5 756.5 H1103.5"/>
      <path d="M1137 751.5 H1140 L1145 747.5 V762.5 L1140 758.5 H1137 Z M1148 752 C1150 754 1150 756 1148 758 M1150.5 750 C1153 753 1153 757 1150.5 760"/>
      <path d="M1178 760 C1180 755 1184 749 1188 747 C1191 746 1191 749 1188 752 C1185 756 1181 761 1180 758 C1179 755 1186 753 1190 752"/>
      
    </g>
    <rect x="1105" y="752" width="9" height="6" fill="#eee"/>
    <circle cx="1083" cy="760" r="1.2" fill="#eee"/>
    <path d="M1331 745 H1349.5 V758 H1343 L1339 762.5 V758 H1331 Z" fill="#f2f2f2"/><path d="M1334.5 749 H1346 M1334.5 752 H1346 M1334.5 755 H1340" stroke="#3b3a2b" stroke-width="1"/><circle cx="1345.5" cy="759.5" r="3.8" fill="#f2f2f2" stroke="#3b3a2b" stroke-width="1"/>
    <rect x="1370.5" y="733" width="1" height="43" fill="#8a8878"/>
    </g>
  </svg>
<div class="t" style="left:95.0px;top:15.3px;font-size:16px;color:#333;">Type here to search</div>
<div class="t" style="left:1212.6px;top:15.4px;font-size:13px;letter-spacing:-0.3px;color:#eee;">ENG</div>
<div class="t" style="left:1258.2px;top:5.9px;font-size:12.5px;color:#eee;">1:46 PM</div>
<div class="t" style="left:1252.0px;top:25.1px;font-size:13px;color:#eee;">12/4/2019</div>
</div>
</body></html>
